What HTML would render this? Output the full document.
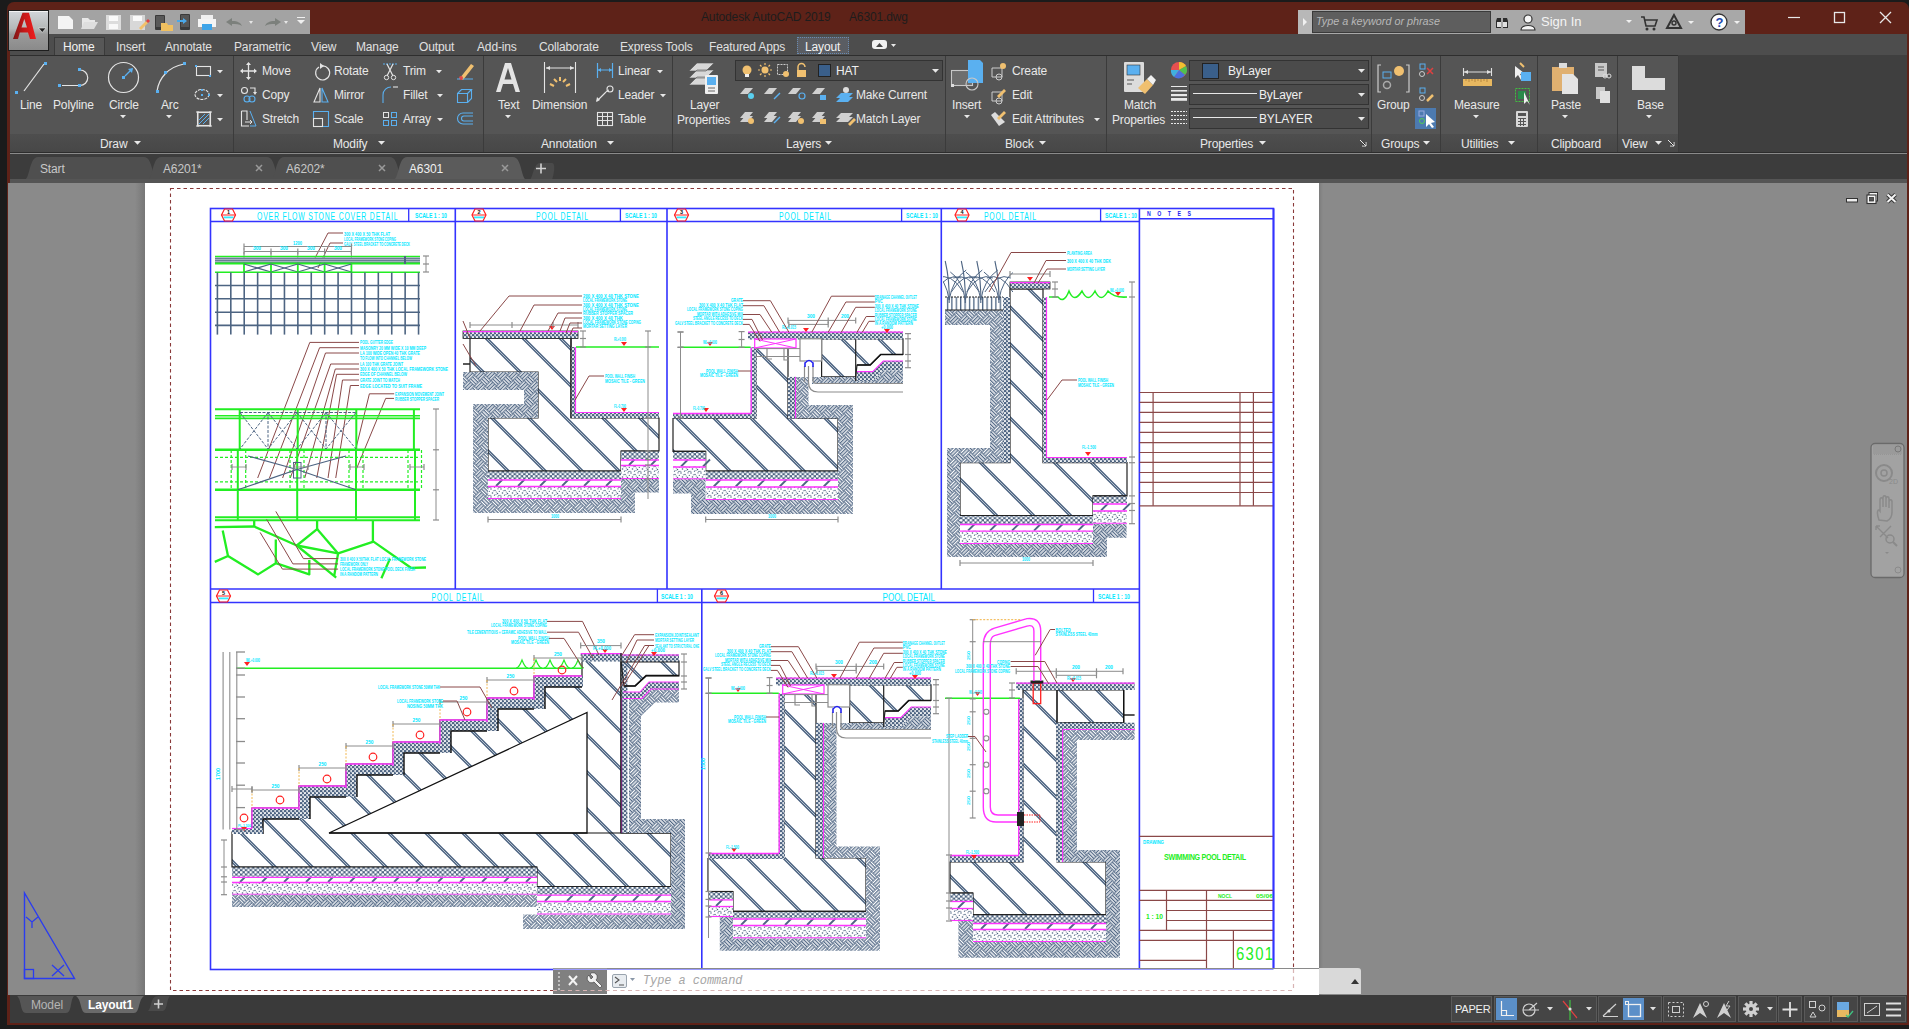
<!DOCTYPE html>
<html><head><meta charset="utf-8">
<style>
html,body{margin:0;padding:0;width:1909px;height:1029px;overflow:hidden;background:#1a1a1a;font-family:"Liberation Sans",sans-serif}
.a{position:absolute}
.t{position:absolute;white-space:nowrap;font-family:"Liberation Sans",sans-serif;line-height:1}
.rt{color:#e8e8e8;font-size:12.5px}
.tab{position:absolute;top:40.5px;letter-spacing:-0.15px;font-size:12px;color:#e0e0e0;white-space:nowrap;line-height:1}
svg{position:absolute;overflow:visible}
</style></head><body>
<!-- desktop -->
<div class="a" style="left:0;top:0;width:1909px;height:1029px;background:#1b1b1b"></div>
<!-- window frame -->
<div class="a" style="left:7px;top:2px;width:1902px;height:1023px;background:#5e2218;border-radius:7px 7px 0 0"></div>
<!-- title -->
<div class="t" style="left:701px;top:11px;font-size:12px;color:#1d1d1d;letter-spacing:-0.15px">Autodesk AutoCAD 2019</div>
<div class="t" style="left:849px;top:11px;font-size:12px;color:#1d1d1d;letter-spacing:-0.15px">A6301.dwg</div>
<!-- QAT -->
<div class="a" style="left:48px;top:10px;width:262px;height:24px;background:#a3a3a3"></div>

<svg style="left:48px;top:10px" width="262" height="24">
 <path d="M10 6 H21 L25 10 V19 H10 Z" fill="#f4f4f4"/>
 <path d="M34 8 H40 L42 10 H47 V12 H37 L34 19 Z" fill="#e8e8e8"/><path d="M36 12 H50 L46 19 H33 Z" fill="#dedede"/>
 <rect x="58" y="5" width="15" height="15" fill="#dcdcdc"/><rect x="61" y="6" width="9" height="5" fill="#fafafa"/><rect x="61" y="14" width="9" height="5" fill="#f8f8f8"/>
 <rect x="82" y="5" width="15" height="15" fill="#d8d8d8"/><rect x="85" y="6" width="9" height="5" fill="#fafafa"/><path d="M91 18 L98 11 L100 13 L93 20 Z" fill="#f2c06a"/><path d="M98 11 L100 9 L102 11 L100 13Z" fill="#e04040"/>
 <rect x="107" y="5" width="10" height="15" rx="1" fill="#3a3a3a"/><rect x="108" y="6" width="8" height="11" fill="#585858"/><path d="M113 13 H119 L120 15 H125 V21 H113 Z" fill="#f0c060"/>
 <rect x="132" y="4" width="10" height="16" rx="1" fill="#3a3a3a"/><rect x="133" y="5" width="8" height="12" fill="#555"/><path d="M129 10 H135 V8 L139 11 L135 14 V12 H129Z" fill="#4aa8e8"/>
 <rect x="153" y="5" width="12" height="5" fill="#f0f0f0"/><rect x="150" y="9" width="18" height="8" fill="#f4f4f4"/><rect x="154" y="14" width="10" height="6" fill="#3ea4e8"/>
 <path d="M178 12 L184 8 V11 C190 11 193 13 194 16 C191 14 188 14 184 14 V16 Z" fill="#7c807c"/><path d="M201 11 L205 11 L203 14Z" fill="#e6e6e6"/>
 <path d="M233 12 L227 8 V11 C221 11 218 13 217 16 C220 14 223 14 227 14 V16 Z" fill="#7c807c"/><path d="M236 11 L240 11 L238 14Z" fill="#e6e6e6"/>
 <path d="M249 7 H257 V8 H249Z M249 10 L257 10 L253 14Z" fill="#f0f0f0"/>
</svg>
<!-- search/info -->
<div class="a" style="left:1298px;top:10px;width:447px;height:24px;background:#a8a8a8"></div>
<div class="a" style="left:1298px;top:10px;width:14px;height:24px;background:#b8b8b8"></div>
<svg style="left:1298px;top:10px" width="14" height="24"><path d="M5 8 L9 12 L5 16Z" fill="#f0f0f0"/></svg>
<div class="a" style="left:1312px;top:11px;width:179px;height:22px;background:#5e5e5e;border:1px solid #3a3a3a;box-sizing:border-box"></div>
<div class="t" style="left:1316px;top:16px;font-size:10.8px;color:#b8b8b8;font-style:italic">Type a keyword or phrase</div>
<svg style="left:1490px;top:10px" width="260" height="24">
 <path d="M7 8 h4 v10 h-5 v-7z M13 8 h4 l1 3 v7 h-5z" fill="#2c2c2c"/><rect x="7" y="12" width="4" height="5" fill="#e0e0e0"/><rect x="13" y="12" width="4" height="5" fill="#e0e0e0"/>
 <circle cx="38" cy="9" r="4" fill="#f5f5f5" stroke="#333" stroke-width="1.2"/><path d="M31 20 C31 14 45 14 45 20Z" fill="#f5f5f5" stroke="#333" stroke-width="1.2"/>
 <path d="M136 10 L142 10 L139 13Z" fill="#f0f0f0"/>
 <path d="M151 7 h3 l2 9 h9 l2 -6 h-12" fill="none" stroke="#333" stroke-width="1.6"/><circle cx="157" cy="19" r="1.5" fill="#333"/><circle cx="164" cy="19" r="1.5" fill="#333"/>
 <path d="M184 5 L177 18 H191 Z" fill="none" stroke="#333" stroke-width="2"/><circle cx="184" cy="13" r="2" fill="none" stroke="#333" stroke-width="1.4"/>
 <path d="M198 11 L204 11 L201 14Z" fill="#f0f0f0"/>
 <circle cx="229" cy="12" r="8" fill="#fff" stroke="#333" stroke-width="1.3"/><text x="225.5" y="17" font-size="13" font-weight="bold" fill="#2448b0" font-family="Liberation Sans">?</text>
 <path d="M244 11 L250 11 L247 14Z" fill="#f0f0f0"/>
</svg>
<div class="t" style="left:1541px;top:15px;font-size:13px;color:#f4f4f4">Sign In</div>
<!-- window controls -->
<svg style="left:1780px;top:5px" width="129" height="26">
 <path d="M8 12.5 H20" stroke="#e8e8e8" stroke-width="1.2"/>
 <rect x="54.5" y="7.5" width="10" height="10" fill="none" stroke="#e8e8e8" stroke-width="1.3"/>
 <path d="M100 7 L111 18 M111 7 L100 18" stroke="#e8e8e8" stroke-width="1.3"/>
</svg>

<!-- ribbon tab row -->
<div class="a" style="left:10px;top:34px;width:1897px;height:21px;background:#4d4d4d"></div>
<div class="a" style="left:54px;top:37px;width:51px;height:19px;background:#575757;border:1px solid #3a3a3a;border-bottom:none;box-sizing:border-box"></div>
<div class="tab" style="left:63px;color:#f2f2f2">Home</div>
<div class="tab" style="left:116px">Insert</div>
<div class="tab" style="left:165px">Annotate</div>
<div class="tab" style="left:234px">Parametric</div>
<div class="tab" style="left:311px">View</div>
<div class="tab" style="left:356px">Manage</div>
<div class="tab" style="left:419px">Output</div>
<div class="tab" style="left:477px">Add-ins</div>
<div class="tab" style="left:539px">Collaborate</div>
<div class="tab" style="left:620px">Express Tools</div>
<div class="tab" style="left:709px">Featured Apps</div>
<div class="a" style="left:797px;top:37px;width:52px;height:17px;background:#5a5d63;border:1px dotted #6a8ab0;box-sizing:border-box"></div>
<div class="tab" style="left:805px;color:#f2f2f2">Layout</div>
<svg style="left:870px;top:38px" width="30" height="14"><rect x="2" y="2" width="15" height="9" rx="3" fill="#f0f0f0"/><path d="M6 9 L9.5 5 L13 9Z" fill="#444"/><path d="M21 6 L26 6 L23.5 9Z" fill="#e8e8e8"/></svg>

<!-- ribbon body -->
<div class="a" style="left:10px;top:55px;width:1897px;height:99px;background:#3f3f3f"></div>
<div class="a" style="left:10px;top:55px;width:1668px;height:1px;background:#2e2e2e"></div>
<!-- panels -->
<div class="a" style="left:10px;top:56px;width:1668px;height:97px;background:#555555"></div>
<div class="a" style="left:10px;top:134px;width:1668px;height:17.5px;background:linear-gradient(#4e4e4e,#474747)"></div>
<div class="a" style="left:10px;top:151.5px;width:1897px;height:1.5px;background:#2c2c2c"></div>
<div class="a" style="left:10px;top:153px;width:1897px;height:1.2px;background:#8a8a8a"></div>
<!-- separators -->
<div class="a" style="left:233px;top:56px;width:1px;height:96px;background:#3b3b3b"></div>
<div class="a" style="left:483px;top:56px;width:1px;height:96px;background:#3b3b3b"></div>
<div class="a" style="left:672px;top:56px;width:1px;height:96px;background:#3b3b3b"></div>
<div class="a" style="left:945px;top:56px;width:1px;height:96px;background:#3b3b3b"></div>
<div class="a" style="left:1106px;top:56px;width:1px;height:96px;background:#3b3b3b"></div>
<div class="a" style="left:1371px;top:56px;width:1px;height:96px;background:#3b3b3b"></div>
<div class="a" style="left:1440px;top:56px;width:1px;height:96px;background:#3b3b3b"></div>
<div class="a" style="left:1537px;top:56px;width:1px;height:96px;background:#3b3b3b"></div>
<div class="a" style="left:1617px;top:56px;width:1px;height:96px;background:#3b3b3b"></div>
<div class="a" style="left:1678px;top:56px;width:1px;height:96px;background:#3b3b3b"></div>
<div class="t" style="left:20px;top:98.5px;font-size:12px;color:#e8e8e8;letter-spacing:-0.15px;">Line</div><div class="t" style="left:53px;top:98.5px;font-size:12px;color:#e8e8e8;letter-spacing:-0.15px;">Polyline</div><div class="t" style="left:109px;top:98.5px;font-size:12px;color:#e8e8e8;letter-spacing:-0.15px;">Circle</div><div class="t" style="left:161px;top:98.5px;font-size:12px;color:#e8e8e8;letter-spacing:-0.15px;">Arc</div><div class="t" style="left:100px;top:137.5px;font-size:12px;color:#e8e8e8;letter-spacing:-0.15px;">Draw</div><div class="t" style="left:262px;top:64.5px;font-size:12px;color:#e8e8e8;letter-spacing:-0.15px;">Move</div><div class="t" style="left:334px;top:64.5px;font-size:12px;color:#e8e8e8;letter-spacing:-0.15px;">Rotate</div><div class="t" style="left:403px;top:64.5px;font-size:12px;color:#e8e8e8;letter-spacing:-0.15px;">Trim</div><div class="t" style="left:262px;top:88.5px;font-size:12px;color:#e8e8e8;letter-spacing:-0.15px;">Copy</div><div class="t" style="left:334px;top:88.5px;font-size:12px;color:#e8e8e8;letter-spacing:-0.15px;">Mirror</div><div class="t" style="left:403px;top:88.5px;font-size:12px;color:#e8e8e8;letter-spacing:-0.15px;">Fillet</div><div class="t" style="left:262px;top:112.5px;font-size:12px;color:#e8e8e8;letter-spacing:-0.15px;">Stretch</div><div class="t" style="left:334px;top:112.5px;font-size:12px;color:#e8e8e8;letter-spacing:-0.15px;">Scale</div><div class="t" style="left:403px;top:112.5px;font-size:12px;color:#e8e8e8;letter-spacing:-0.15px;">Array</div><div class="t" style="left:333px;top:137.5px;font-size:12px;color:#e8e8e8;letter-spacing:-0.15px;">Modify</div><div class="t" style="left:498px;top:98.5px;font-size:12px;color:#e8e8e8;letter-spacing:-0.15px;">Text</div><div class="t" style="left:532px;top:98.5px;font-size:12px;color:#e8e8e8;letter-spacing:-0.15px;">Dimension</div><div class="t" style="left:618px;top:64.5px;font-size:12px;color:#e8e8e8;letter-spacing:-0.15px;">Linear</div><div class="t" style="left:618px;top:88.5px;font-size:12px;color:#e8e8e8;letter-spacing:-0.15px;">Leader</div><div class="t" style="left:618px;top:112.5px;font-size:12px;color:#e8e8e8;letter-spacing:-0.15px;">Table</div><div class="t" style="left:541px;top:137.5px;font-size:12px;color:#e8e8e8;letter-spacing:-0.15px;">Annotation</div><div class="t" style="left:690px;top:98.5px;font-size:12px;color:#e8e8e8;letter-spacing:-0.15px;">Layer</div><div class="t" style="left:677px;top:113.5px;font-size:12px;color:#e8e8e8;letter-spacing:-0.15px;">Properties</div><div class="a" style="left:735px;top:60px;width:208px;height:21px;background:#4b4b4b;border:1px solid #333;box-sizing:border-box"></div><div class="t" style="left:836px;top:64.5px;font-size:12px;color:#f0f0f0;letter-spacing:-0.15px;">HAT</div><div class="t" style="left:856px;top:88.5px;font-size:12px;color:#e8e8e8;letter-spacing:-0.15px;">Make Current</div><div class="t" style="left:856px;top:112.5px;font-size:12px;color:#e8e8e8;letter-spacing:-0.15px;">Match Layer</div><div class="t" style="left:786px;top:137.5px;font-size:12px;color:#e8e8e8;letter-spacing:-0.15px;">Layers</div><div class="t" style="left:952px;top:98.5px;font-size:12px;color:#e8e8e8;letter-spacing:-0.15px;">Insert</div><div class="t" style="left:1012px;top:64.5px;font-size:12px;color:#e8e8e8;letter-spacing:-0.15px;">Create</div><div class="t" style="left:1012px;top:88.5px;font-size:12px;color:#e8e8e8;letter-spacing:-0.15px;">Edit</div><div class="t" style="left:1012px;top:112.5px;font-size:12px;color:#e8e8e8;letter-spacing:-0.15px;">Edit Attributes</div><div class="t" style="left:1005px;top:137.5px;font-size:12px;color:#e8e8e8;letter-spacing:-0.15px;">Block</div><div class="t" style="left:1124px;top:98.5px;font-size:12px;color:#e8e8e8;letter-spacing:-0.15px;">Match</div><div class="t" style="left:1112px;top:113.5px;font-size:12px;color:#e8e8e8;letter-spacing:-0.15px;">Properties</div><div class="a" style="left:1189px;top:60px;width:180px;height:21px;background:#4b4b4b;border:1px solid #333;box-sizing:border-box"></div><div class="a" style="left:1189px;top:84px;width:180px;height:21px;background:#4b4b4b;border:1px solid #333;box-sizing:border-box"></div><div class="a" style="left:1189px;top:108px;width:180px;height:21px;background:#4b4b4b;border:1px solid #333;box-sizing:border-box"></div><div class="t" style="left:1228px;top:64.5px;font-size:12px;color:#f0f0f0;letter-spacing:-0.15px;">ByLayer</div><div class="t" style="left:1259px;top:88.5px;font-size:12px;color:#f0f0f0;letter-spacing:-0.15px;">ByLayer</div><div class="t" style="left:1259px;top:112.5px;font-size:12px;color:#f0f0f0;letter-spacing:-0.15px;">BYLAYER</div><div class="t" style="left:1200px;top:137.5px;font-size:12px;color:#e8e8e8;letter-spacing:-0.15px;">Properties</div><div class="t" style="left:1377px;top:98.5px;font-size:12px;color:#e8e8e8;letter-spacing:-0.15px;">Group</div><div class="t" style="left:1381px;top:137.5px;font-size:12px;color:#e8e8e8;letter-spacing:-0.15px;">Groups</div><div class="t" style="left:1454px;top:98.5px;font-size:12px;color:#e8e8e8;letter-spacing:-0.15px;">Measure</div><div class="t" style="left:1461px;top:137.5px;font-size:12px;color:#e8e8e8;letter-spacing:-0.15px;">Utilities</div><div class="t" style="left:1551px;top:98.5px;font-size:12px;color:#e8e8e8;letter-spacing:-0.15px;">Paste</div><div class="t" style="left:1551px;top:137.5px;font-size:12px;color:#e8e8e8;letter-spacing:-0.15px;">Clipboard</div><div class="t" style="left:1637px;top:98.5px;font-size:12px;color:#e8e8e8;letter-spacing:-0.15px;">Base</div><div class="t" style="left:1622px;top:137.5px;font-size:12px;color:#e8e8e8;letter-spacing:-0.15px;">View</div><svg style="left:0;top:0" width="1909" height="160"><line x1="24" y1="91" x2="44" y2="64" stroke="#e4e4e4" stroke-width="1.2"/><rect x="15" y="91" width="3" height="3" fill="#5ab0f0"/><rect x="44" y="62" width="3" height="3" fill="#5ab0f0"/><path d="M62 85.5 H79 M80 70 A7.5 7.5 0 0 1 80 85.5" fill="none" stroke="#e4e4e4" stroke-width="1.2"/><rect x="58" y="84" width="3" height="3" fill="#5ab0f0"/><rect x="78" y="84" width="3" height="3" fill="#5ab0f0"/><rect x="78" y="68" width="3" height="3" fill="#5ab0f0"/><circle cx="123.5" cy="77.5" r="15" fill="none" stroke="#e4e4e4" stroke-width="1.2"/><rect x="122" y="76" width="3" height="3" fill="#5ab0f0"/><path d="M125 76 L132 69" stroke="#5ab0f0" stroke-width="1.2"/><path d="M133 68 L128 69 L132 73Z" fill="#5ab0f0"/><path d="M120 115 h6 l-3.0 3.3000000000000003z" fill="#e8e8e8"/><path d="M157 91 C159 78 168 67 184 64" fill="none" stroke="#e4e4e4" stroke-width="1.2"/><rect x="156" y="90" width="3" height="3" fill="#5ab0f0"/><rect x="164" y="71" width="3" height="3" fill="#5ab0f0"/><rect x="183" y="62" width="3" height="3" fill="#5ab0f0"/><path d="M166 115 h6 l-3.0 3.3000000000000003z" fill="#e8e8e8"/><rect x="196.5" y="66.5" width="14" height="9" fill="none" stroke="#e4e4e4" stroke-width="1.1"/><rect x="195" y="65" width="2" height="2" fill="#5ab0f0"/><rect x="209" y="75" width="2" height="2" fill="#5ab0f0"/><path d="M217 70 h6 l-3.0 3.3000000000000003z" fill="#e8e8e8"/><ellipse cx="202" cy="94.5" rx="7" ry="5" fill="none" stroke="#e4e4e4" stroke-width="1.1" stroke-dasharray="3 1"/><rect x="201" y="89" width="2" height="2" fill="#5ab0f0"/><rect x="201" y="94" width="2" height="2" fill="#5ab0f0"/><rect x="208" y="94" width="2" height="2" fill="#5ab0f0"/><path d="M217 94 h6 l-3.0 3.3000000000000003z" fill="#e8e8e8"/><rect x="197.5" y="112.5" width="13" height="13" fill="none" stroke="#e4e4e4" stroke-width="1.1"/><path d="M196 112 H212 M196 126 H212 M198 111 V127 M210 111 V127" stroke="#e4e4e4" stroke-width="1"/><path d="M199 124 L209 114 M199 120 L205 114 M203 124 L209 118" stroke="#5ab0f0" stroke-width="1"/><path d="M217 118 h6 l-3.0 3.3000000000000003z" fill="#e8e8e8"/><path d="M134 141 h7 l-3.5 3.8500000000000005z" fill="#e8e8e8"/><path d="M248.5 63 V79 M241 71 H256" stroke="#e4e4e4" stroke-width="1.3"/><path d="M248.5 62 l-2.5 3 h5z M248.5 80 l-2.5 -3 h5z M240 71 l3 -2.5 v5z M257 71 l-3 -2.5 v5z" fill="#e4e4e4"/><path d="M319 67 A7 7 0 1 0 322 66" fill="none" stroke="#e4e4e4" stroke-width="1.2"/><path d="M320 63 L324 66 L320 69Z" fill="#e4e4e4"/><path d="M383 64 H397" stroke="#5ab0f0" stroke-width="1" stroke-dasharray="2 1"/><path d="M387 64 L393 76 M393 64 L387 76" stroke="#e4e4e4" stroke-width="1.2"/><circle cx="386.5" cy="77.5" r="2.2" fill="none" stroke="#e4e4e4"/><circle cx="393.5" cy="77.5" r="2.2" fill="none" stroke="#e4e4e4"/><path d="M436 70 h6 l-3.0 3.3000000000000003z" fill="#e8e8e8"/><path d="M460 78 L471 64 L474 66 L463 80Z" fill="#f0c070"/><circle cx="461" cy="78" r="2" fill="#e04848"/><path d="M457 79 H460 M463 79 H473" stroke="#5ab0f0" stroke-width="1"/><circle cx="244.5" cy="90.5" r="3" fill="none" stroke="#e4e4e4" stroke-width="1.1"/><path d="M250 88 H255 V93" fill="none" stroke="#e4e4e4" stroke-width="1.1"/><path d="M253 92 h4 l-2 3z" fill="#e4e4e4"/><circle cx="247" cy="99" r="3" fill="none" stroke="#5ab0f0" stroke-width="1.1"/><circle cx="252" cy="99" r="3" fill="none" stroke="#5ab0f0" stroke-width="1.1"/><path d="M320 88 L314 102 H320Z" fill="none" stroke="#e4e4e4" stroke-width="1.1"/><path d="M322 88 L328 102 H322Z" fill="none" stroke="#5ab0f0" stroke-width="1.1"/><path d="M383 103 V95 C383 90 387 87 391 87" fill="none" stroke="#5ab0f0" stroke-width="1.1"/><path d="M393 87 H398" stroke="#e4e4e4" stroke-width="1.1"/><path d="M437 94 h6 l-3.0 3.3000000000000003z" fill="#e8e8e8"/><path d="M457.5 93.5 h10 v9 h-10z M457.5 93.5 l4 -4 h10 l-4 4 M467.5 102.5 l4 -4 v-9" fill="none" stroke="#5ab0f0" stroke-width="1.1"/><path d="M241.5 111 V126 H249 M241.5 111 H247 V120" fill="none" stroke="#e4e4e4" stroke-width="1.1"/><path d="M250 111 L256 126 H250" fill="none" stroke="#5ab0f0" stroke-width="1"/><path d="M245 122 H252 l-2 -2 M252 122 l-2 2" fill="none" stroke="#e4e4e4" stroke-width="1"/><rect x="313.5" y="118.5" width="9" height="8" fill="none" stroke="#e4e4e4" stroke-width="1.1"/><path d="M313.5 118 V111.5 H328.5 V126.5 H323" fill="none" stroke="#5ab0f0" stroke-width="1.1"/><rect x="383.5" y="112.5" width="5" height="5" fill="none" stroke="#e4e4e4"/><rect x="391.5" y="112.5" width="5" height="5" fill="none" stroke="#5ab0f0"/><rect x="383.5" y="120.5" width="5" height="5" fill="none" stroke="#5ab0f0"/><rect x="391.5" y="120.5" width="5" height="5" fill="none" stroke="#5ab0f0"/><path d="M437 118 h6 l-3.0 3.3000000000000003z" fill="#e8e8e8"/><path d="M473 113 H463 A5.5 5.5 0 0 0 463 124 H473 M473 116 H464 A2.5 2.5 0 0 0 464 121 H473" fill="none" stroke="#5ab0f0" stroke-width="1.1"/><path d="M378 141 h7 l-3.5 3.8500000000000005z" fill="#e8e8e8"/><path d="M496 92 L505 63 H511 L520 92 H515.5 L513 84 H503 L500.5 92Z M504.5 79.5 H511.5 L508 68Z" fill="#e4e4e4"/><path d="M505 115 h6 l-3.0 3.3000000000000003z" fill="#e8e8e8"/><path d="M544.5 62 V93 M575.5 62 V93 M546 68 H574" stroke="#e4e4e4" stroke-width="1.1"/><path d="M546 68 l4 -2 v4z M574 68 l-4 -2 v4z" fill="#e4e4e4"/><path d="M554 86 L550 84 M557 82 L554 79 M560 81 V77 M563 82 L566 79 M566 86 L570 84" stroke="#f0c070" stroke-width="2"/><path d="M597.5 63 V78 M612.5 63 V78 M598 70 H612" stroke="#5ab0f0" stroke-width="1.2"/><path d="M598 70 l3 -2 v4z M612 70 l-3 -2 v4z" fill="#5ab0f0"/><path d="M657 70 h6 l-3.0 3.3000000000000003z" fill="#e8e8e8"/><path d="M597 101 L605 93 C607 91 608 90 609 90" fill="none" stroke="#e4e4e4" stroke-width="1.1"/><circle cx="610" cy="89" r="3" fill="none" stroke="#e4e4e4" stroke-width="1.1"/><path d="M596 102 l1 -5 l3 3z" fill="#e4e4e4"/><path d="M660 94 h6 l-3.0 3.3000000000000003z" fill="#e8e8e8"/><rect x="597.5" y="112.5" width="15" height="13" fill="none" stroke="#e4e4e4" stroke-width="1.1"/><path d="M597 116.5 H613 M597 120.5 H613 M602.5 113 V125 M607.5 113 V125" stroke="#e4e4e4" stroke-width="1"/><path d="M607 141 h7 l-3.5 3.8500000000000005z" fill="#e8e8e8"/><path d="M689 71 L697 63 H714 L706 71Z M689 78 L697 70 H714 L706 78Z M689 85 L697 77 H714 L706 85Z" fill="#d8d8d8" stroke="#555" stroke-width="0.6"/><rect x="705" y="75" width="13" height="19" rx="1" fill="#f0f0f0"/><rect x="707" y="77" width="9" height="8" fill="#5ab0f0"/><path d="M708 88 H715 M708 91 H715" stroke="#444" stroke-width="0.8"/><circle cx="747" cy="70" r="4.5" fill="#f0c070"/><rect x="745" y="74" width="4" height="3" fill="#f0f0f0"/><circle cx="765" cy="70" r="3.5" fill="#f0c070"/><path d="M765 63 V65 M765 75 V77 M758 70 H760 M770 70 H772 M760 65 L761.5 66.5 M770 65 L768.5 66.5 M760 75 L761.5 73.5 M770 75 L768.5 73.5" stroke="#f0c070" stroke-width="1.2"/><rect x="777.5" y="64.5" width="10" height="10" fill="none" stroke="#ccc" stroke-dasharray="2 1"/><circle cx="786" cy="74" r="3" fill="#f0c070"/><path d="M798 71 V67 A3.5 3.5 0 0 1 805 67" fill="none" stroke="#f0c070" stroke-width="1.5"/><rect x="797" y="70" width="9" height="7" fill="#f0c070"/><rect x="818.5" y="64.5" width="12" height="12" fill="#3a5f8a" stroke="#222"/><path d="M932 69 h7 l-3.5 3.8500000000000005z" fill="#e8e8e8"/><path d="M740 94 L745 88 H753 L748 94Z" fill="#d0d0d0"/><path d="M764 94 L769 88 H777 L772 94Z" fill="#d0d0d0"/><path d="M788 94 L793 88 H801 L796 94Z" fill="#d0d0d0"/><path d="M812 94 L817 88 H825 L820 94Z" fill="#d0d0d0"/><circle cx="751" cy="96" r="3" fill="#5ad0f0"/><path d="M774 99 L780 93" stroke="#5ab0f0" stroke-width="1.4"/><circle cx="802" cy="96" r="3" fill="none" stroke="#5ab0f0" stroke-width="1.2"/><rect x="820" y="95" width="6" height="5" fill="#5ab0f0"/><path d="M836 98 L841 93 H853 L848 98Z M836 102 L841 97 H853 L848 102Z" fill="#5ab0f0"/><circle cx="846" cy="90" r="3" fill="#ddd"/><path d="M740 118 L745 112 H753 L748 118Z M740 122 L745 116 H753 L748 122Z" fill="#d0d0d0"/><path d="M764 118 L769 112 H777 L772 118Z M764 122 L769 116 H777 L772 122Z" fill="#d0d0d0"/><path d="M788 118 L793 112 H801 L796 118Z M788 122 L793 116 H801 L796 122Z" fill="#d0d0d0"/><path d="M812 118 L817 112 H825 L820 118Z M812 122 L817 116 H825 L820 122Z" fill="#d0d0d0"/><circle cx="751" cy="121" r="3" fill="#f0c070"/><path d="M774 123 L780 117" stroke="#5ab0f0" stroke-width="1.4"/><circle cx="801" cy="121" r="3" fill="#f0c070"/><rect x="820" y="119" width="6" height="5" fill="#f0c070"/><path d="M836 118 L841 113 H853 L848 118Z M836 122 L841 117 H853 L848 122Z" fill="#d0d0d0"/><path d="M848 124 L854 118 L856 120 L850 126Z" fill="#f0c070"/><path d="M825 141 h7 l-3.5 3.8500000000000005z" fill="#e8e8e8"/><rect x="951.5" y="70.5" width="21" height="15" fill="#6e6e6e" stroke="#c8c8c8" stroke-width="1.1"/><path d="M968 60 H980 L983 63 V83 H968Z" fill="#5ab0f0"/><circle cx="972" cy="84" r="6" fill="none" stroke="#c8c8c8" stroke-width="1.1"/><rect x="951" y="84" width="3" height="3" fill="#ddd"/><path d="M964 115 h6 l-3.0 3.3000000000000003z" fill="#e8e8e8"/><path d="M992 68 H1002 V77 H992Z" fill="none" stroke="#ccc"/><circle cx="999" cy="77" r="3" fill="none" stroke="#ccc"/><circle cx="1003" cy="66" r="3" fill="#f0c070"/><path d="M992 92 H1002 V101 H992Z" fill="none" stroke="#ccc"/><circle cx="999" cy="101" r="3" fill="none" stroke="#ccc"/><path d="M997 96 L1004 89 L1006 91 L999 98Z" fill="#f0c070"/><path d="M991 115 L995 112 L1005 122 L999 126Z" fill="#ddd"/><path d="M997 118 L1004 111 L1006 113 L999 120Z" fill="#f0c070"/><path d="M1094 118 h6 l-3.0 3.3000000000000003z" fill="#e8e8e8"/><path d="M1039 141 h7 l-3.5 3.8500000000000005z" fill="#e8e8e8"/><rect x="1124" y="62" width="20" height="30" rx="1" fill="#dcdcdc"/><rect x="1127" y="65" width="13" height="10" fill="#5ab0f0" stroke="#333" stroke-width="0.6"/><path d="M1127 80 H1134 M1127 84 H1132" stroke="#555" stroke-width="1"/><path d="M1138 88 L1147 79 L1153 85 L1145 94Z" fill="#f0c070"/><path d="M1147 79 L1151 75 L1156 80 L1153 85Z" fill="#f0f0f0"/><circle cx="1179" cy="70" r="8" fill="#e85050"/><path d="M1179 70 L1179 62 A8 8 0 0 1 1186 66Z" fill="#f0c030"/><path d="M1179 70 L1186 66 A8 8 0 0 1 1185 75Z" fill="#50c050"/><path d="M1179 70 L1185 75 A8 8 0 0 1 1174 77Z" fill="#4a70e0"/><path d="M1179 70 L1174 77 A8 8 0 0 1 1171 70Z" fill="#40b0e0"/><rect x="1171" y="86" width="16" height="1.0" fill="#e8e8e8"/><rect x="1171" y="90" width="16" height="1.6" fill="#e8e8e8"/><rect x="1171" y="94" width="16" height="2.2" fill="#e8e8e8"/><rect x="1171" y="98" width="16" height="2.8" fill="#e8e8e8"/><path d="M1171 111.5 H1187" stroke="#e8e8e8" stroke-width="1" stroke-dasharray="2 1"/><path d="M1171 115.5 H1187" stroke="#e8e8e8" stroke-width="1" stroke-dasharray="2 1"/><path d="M1171 119.5 H1187" stroke="#e8e8e8" stroke-width="1" stroke-dasharray="2 1"/><path d="M1171 123.5 H1187" stroke="#e8e8e8" stroke-width="1" stroke-dasharray="2 1"/><path d="M1358 69 h7 l-3.5 3.8500000000000005z" fill="#e8e8e8"/><path d="M1358 93 h7 l-3.5 3.8500000000000005z" fill="#e8e8e8"/><path d="M1358 117 h7 l-3.5 3.8500000000000005z" fill="#e8e8e8"/><rect x="1202.5" y="63.5" width="16" height="15" fill="#3a5f8a" stroke="#222"/><path d="M1193 93.5 H1257 M1193 117.5 H1257" stroke="#e8e8e8" stroke-width="1"/><path d="M1259 141 h7 l-3.5 3.8500000000000005z" fill="#e8e8e8"/><path d="M1360 140 L1366 146 M1366 142 V146 H1362" stroke="#e8e8e8" stroke-width="1"/><path d="M1381 65 H1378 V92 H1381 M1406 65 H1409 V92 H1406" fill="none" stroke="#ccc" stroke-width="1.2"/><rect x="1383" y="72" width="8" height="6" fill="none" stroke="#5ab0f0"/><circle cx="1387" cy="85" r="3.5" fill="none" stroke="#aaa" stroke-width="1.5"/><circle cx="1399" cy="71" r="5" fill="#f0c070"/><rect x="1420" y="64" width="5" height="5" fill="none" stroke="#5ab0f0"/><circle cx="1422" cy="74" r="2.5" fill="none" stroke="#ccc"/><path d="M1427 68 L1433 74 M1433 68 L1427 74" stroke="#e04040" stroke-width="1.5"/><rect x="1420" y="88" width="5" height="5" fill="none" stroke="#5ab0f0"/><circle cx="1422" cy="98" r="2.5" fill="none" stroke="#ccc"/><path d="M1427 101 L1433 95" stroke="#f0c070" stroke-width="2.5"/><rect x="1415" y="108" width="21" height="21" fill="#4c7ab0"/><rect x="1419" y="111" width="5" height="5" fill="none" stroke="#9ad"/><circle cx="1422" cy="121" r="2.5" fill="none" stroke="#5c5"/><path d="M1426 114 L1426 127 L1429 124 L1432 128 L1434 127 L1431 123 L1435 122Z" fill="#fff"/><path d="M1423 141 h7 l-3.5 3.8500000000000005z" fill="#e8e8e8"/><path d="M1464 72 H1491 M1463.5 68 V76 M1491.5 68 V76" stroke="#e0e0e0" stroke-width="1.1"/><path d="M1464 72 l4 -2 v4z M1491 72 l-4 -2 v4z" fill="#e0e0e0"/><rect x="1463" y="79" width="29" height="7" fill="#e8b860"/><path d="M1466 79 v2 M1469 79 v3 M1472 79 v2 M1475 79 v3 M1478 79 v2 M1481 79 v3 M1484 79 v2 M1487 79 v3" stroke="#a07030" stroke-width="0.7"/><path d="M1473 115 h6 l-3.0 3.3000000000000003z" fill="#e8e8e8"/><path d="M1515 66 L1515 78 L1518 75 L1521 80 L1523 79 L1520 74 L1524 73Z" fill="#f0f0f0"/><rect x="1521" y="72" width="10" height="9" fill="#5ab0f0"/><path d="M1520 63 L1524 67" stroke="#f0c070" stroke-width="2"/><rect x="1515.5" y="88.5" width="14" height="13" fill="none" stroke="#40c040" stroke-dasharray="2 1"/><rect x="1518" y="91" width="8" height="8" fill="#2a8a4a"/><path d="M1524 92 L1524 104 L1527 101 L1530 105Z" fill="#f0f0f0"/><rect x="1516" y="111" width="12" height="16" rx="1" fill="#d8d8d8"/><rect x="1518" y="113" width="8" height="3" fill="#555"/><path d="M1518 118.5 h8 M1518 121.5 h8 M1518 124.5 h8 M1520.5 118 v8 M1523.5 118 v8" stroke="#555" stroke-width="1"/><path d="M1508 141 h7 l-3.5 3.8500000000000005z" fill="#e8e8e8"/><rect x="1552" y="67" width="22" height="24" fill="#e0b070"/><rect x="1559" y="63" width="8" height="5" fill="#ddd"/><path d="M1562 74 H1573 L1578 79 V94 H1562Z" fill="#e4e4e4"/><path d="M1562 115 h6 l-3.0 3.3000000000000003z" fill="#e8e8e8"/><rect x="1595" y="63" width="12" height="14" fill="#c8c8c8"/><path d="M1598 67 h6 M1598 70 h6" stroke="#555"/><circle cx="1605" cy="76" r="2" fill="none" stroke="#ddd"/><circle cx="1609" cy="76" r="2" fill="none" stroke="#ddd"/><rect x="1596" y="87" width="9" height="12" fill="#c8c8c8"/><rect x="1600" y="91" width="10" height="12" fill="#e0e0e0"/><path d="M1632 66 H1645 V78 H1665 V90 H1632Z" fill="#dcdcdc"/><path d="M1646 115 h6 l-3.0 3.3000000000000003z" fill="#e8e8e8"/><path d="M1655 141 h7 l-3.5 3.8500000000000005z" fill="#e8e8e8"/><path d="M1668 140 L1674 146 M1674 142 V146 H1670" stroke="#e8e8e8" stroke-width="1"/></svg>
<!-- app button -->
<div class="a" style="left:8px;top:10px;width:41px;height:41px;background:linear-gradient(#d2d6da,#b4b8b8 45%,#9a9a9a 60%,#8a8a8a);border:1px solid #1e1e1e;box-sizing:border-box;box-shadow:inset 0 1px 0 #f4f4f4"></div>
<svg style="left:0;top:0" width="60" height="60"><defs><linearGradient id="ag" x1="0" x2="1"><stop offset="0" stop-color="#7a1515"/><stop offset="0.5" stop-color="#c81818"/><stop offset="1" stop-color="#f01c1c"/></linearGradient></defs>
<path d="M13 39 L22.5 12.8 L29 12.8 L36 39 L30 39 L28 32.5 L19.8 32.5 L18 39 Z M21.5 27.5 L27 27.5 L24.3 19 Z" fill="url(#ag)" fill-rule="evenodd"/>
<path d="M38.5 28 L46 28 L42.25 32.5Z" fill="#222" stroke="#f0f0f0" stroke-width="0.6"/></svg>


<!-- document tab bar -->
<div class="a" style="left:10px;top:154px;width:1897px;height:29px;background:#3c3c3c"></div>
<svg style="left:0;top:150px" width="1909" height="40"><g transform="translate(0,-150)"><path d="M24 180 C30 180 29 157 38 157 H144 C153 157 152 180 158 180Z" fill="#4f4f4f"/><path d="M147 180 C153 180 152 157 161 157 H267 C276 157 275 180 281 180Z" fill="#4f4f4f"/><path d="M270 180 C276 180 275 157 284 157 H390 C399 157 398 180 404 180Z" fill="#4f4f4f"/><path d="M393 180 C399 180 398 157 407 157 H513 C522 157 521 180 527 180Z" fill="#5b5b5b"/><path d="M529 180 C533 180 533 163 540 163 H552 C555 163 555 170 552 180Z" fill="#4a4a4a"/><path d="M536 168.5 H546 M541 163.5 V173.5" stroke="#d0d0d0" stroke-width="1.6"/><path d="M256 165 L262 171 M262 165 L256 171" stroke="#9a9a9a" stroke-width="1.5"/><path d="M379 165 L385 171 M385 165 L379 171" stroke="#9a9a9a" stroke-width="1.5"/><path d="M502 165 L508 171 M508 165 L502 171" stroke="#9a9a9a" stroke-width="1.5"/></g></svg><div class="t" style="left:40px;top:162.5px;font-size:12px;color:#c8c8c8;letter-spacing:-0.15px;">Start</div><div class="t" style="left:163px;top:162.5px;font-size:12px;color:#c8c8c8;letter-spacing:-0.15px;">A6201*</div><div class="t" style="left:286px;top:162.5px;font-size:12px;color:#c8c8c8;letter-spacing:-0.15px;">A6202*</div><div class="t" style="left:409px;top:162.5px;font-size:12px;color:#f0f0f0;letter-spacing:-0.15px;">A6301</div><div class="a" style="left:10px;top:179px;width:1897px;height:4px;background:#555"></div>

<!-- viewport -->
<div class="a" style="left:8px;top:183px;width:1899px;height:812px;background:#8a8a8a"></div>

<div class="a" style="left:135px;top:183px;width:10px;height:812px;background:linear-gradient(90deg,#8a8a8a,#777)"></div>
<div class="a" style="left:1319px;top:183px;width:4px;height:812px;background:linear-gradient(90deg,#7c7c7c,#8a8a8a)"></div>
<div class="a" style="left:145px;top:183px;width:1174px;height:812px;background:#ffffff"></div>
<svg style="left:0;top:0" width="1909" height="1029" shape-rendering="auto"><defs>
<pattern id="conc" patternUnits="userSpaceOnUse" width="37" height="37">
 <path d="M-2 -2 L39 39 M-2 35 L2 39 M35 -2 L39 2" stroke="#4d6482" stroke-width="3.3"/>
 <path d="M-2 -2 L39 39 M-2 35 L2 39 M35 -2 L39 2" stroke="#b4c0cc" stroke-width="1"/>
</pattern>
<pattern id="soil" patternUnits="userSpaceOnUse" width="15.6" height="15.6" patternTransform="rotate(45)">
 <rect width="15.6" height="15.6" fill="#4d6482"/>
 <path d="M0.3 1.35 H7.5 M0.3 3.9 H7.5 M0.3 6.45 H7.5 M8.1 9.15 H15.299999999999999 M8.1 11.7 H15.299999999999999 M8.1 14.25 H15.299999999999999" stroke="#fff" stroke-width="1.35"/>
 <path d="M9.15 0.3 V7.5 M11.7 0.3 V7.5 M14.25 0.3 V7.5 M1.35 8.1 V15.299999999999999 M3.9 8.1 V15.299999999999999 M6.45 8.1 V15.299999999999999" stroke="#fff" stroke-width="1.35"/>
</pattern>
<pattern id="grav" patternUnits="userSpaceOnUse" width="4.8" height="4.4">
 <rect width="4.8" height="4.4" fill="#4d6482"/>
 <circle cx="1.2" cy="1.1" r="1.3" fill="#fff"/><circle cx="3.6" cy="3.3" r="1.3" fill="#fff"/>
</pattern>
<pattern id="sand" patternUnits="userSpaceOnUse" width="10" height="8">
 <rect width="10" height="8" fill="#fff"/>
 <circle cx="1" cy="1" r="0.75" fill="#4d6482"/><circle cx="5" cy="2.5" r="0.75" fill="#4d6482"/><circle cx="2.5" cy="5" r="0.8" fill="#4d6482"/><circle cx="7.5" cy="5.5" r="0.75" fill="#4d6482"/><circle cx="8" cy="0.8" r="0.65" fill="#4d6482"/><circle cx="4.5" cy="7.2" r="0.65" fill="#4d6482"/><circle cx="9.3" cy="3.3" r="0.65" fill="#4d6482"/><circle cx="9" cy="7.5" r="0.7" fill="#4d6482"/><circle cx="0.8" cy="7.3" r="0.55" fill="#4d6482"/><circle cx="6.3" cy="4" r="0.55" fill="#4d6482"/><circle cx="3.3" cy="2.8" r="0.5" fill="#4d6482"/><circle cx="6" cy="6.5" r="0.5" fill="#4d6482"/>
</pattern>
<pattern id="stone" patternUnits="userSpaceOnUse" width="4" height="4">
 <rect width="4" height="4" fill="#4d6482"/>
 <circle cx="1" cy="1.1" r="1.05" fill="#fff"/><circle cx="3.1" cy="3" r="0.9" fill="#fff"/><circle cx="3.2" cy="0.6" r="0.45" fill="#fff"/>
</pattern>
<pattern id="grass" patternUnits="userSpaceOnUse" width="4.4" height="13">
 <path d="M1.5 0 V13" stroke="#4d6482" stroke-width="1.3"/>
</pattern>
</defs><rect x="170.5" y="188.5" width="1123.00" height="802.00" fill="none" stroke="#8a3a3a" stroke-width="1.1" stroke-dasharray="3.5 3"/><rect x="210.5" y="208.5" width="1063.00" height="761.00" fill="none" stroke="#3333ff" stroke-width="1.6" /><line x1="210.5" y1="221.5" x2="1139.4" y2="221.5" stroke="#3333ff" stroke-width="1.6" /><line x1="455.3" y1="208.5" x2="455.3" y2="589" stroke="#3333ff" stroke-width="1.6" /><line x1="667" y1="208.5" x2="667" y2="589" stroke="#3333ff" stroke-width="1.6" /><line x1="941.3" y1="208.5" x2="941.3" y2="589" stroke="#3333ff" stroke-width="1.6" /><line x1="1139.4" y1="208.5" x2="1139.4" y2="969.5" stroke="#3333ff" stroke-width="1.6" /><line x1="408.7" y1="208.5" x2="408.7" y2="221.5" stroke="#3333ff" stroke-width="1.3" /><line x1="620.4" y1="208.5" x2="620.4" y2="221.5" stroke="#3333ff" stroke-width="1.3" /><line x1="901.6" y1="208.5" x2="901.6" y2="221.5" stroke="#3333ff" stroke-width="1.3" /><line x1="1100.6" y1="208.5" x2="1100.6" y2="221.5" stroke="#3333ff" stroke-width="1.3" /><line x1="210.5" y1="589" x2="1139.4" y2="589" stroke="#3333ff" stroke-width="1.6" /><line x1="210.5" y1="602.5" x2="1139.4" y2="602.5" stroke="#3333ff" stroke-width="1.6" /><line x1="701.8" y1="589" x2="701.8" y2="969.5" stroke="#3333ff" stroke-width="1.6" /><line x1="657.4" y1="589" x2="657.4" y2="602.5" stroke="#3333ff" stroke-width="1.3" /><line x1="1093.5" y1="589" x2="1093.5" y2="602.5" stroke="#3333ff" stroke-width="1.3" /><line x1="1139.4" y1="218.7" x2="1273.5" y2="218.7" stroke="#3333ff" stroke-width="1.6" /><text transform="translate(257,220.2) scale(0.6,1)" x="0" y="0" font-size="11.5" fill="#00e8ff" font-family="Liberation Sans" font-weight="normal" textLength="234.17" lengthAdjust="spacing" >OVER FLOW STONE COVER DETAIL</text><text transform="translate(536,220.2) scale(0.6,1)" x="0" y="0" font-size="11.5" fill="#00e8ff" font-family="Liberation Sans" font-weight="normal" textLength="86.67" lengthAdjust="spacing" >POOL DETAIL</text><text transform="translate(779,220.2) scale(0.6,1)" x="0" y="0" font-size="11.5" fill="#00e8ff" font-family="Liberation Sans" font-weight="normal" textLength="86.67" lengthAdjust="spacing" >POOL DETAIL</text><text transform="translate(984,220.2) scale(0.6,1)" x="0" y="0" font-size="11.5" fill="#00e8ff" font-family="Liberation Sans" font-weight="normal" textLength="86.67" lengthAdjust="spacing" >POOL DETAIL</text><text transform="translate(431.5,601.3) scale(0.6,1)" x="0" y="0" font-size="11.5" fill="#00e8ff" font-family="Liberation Sans" font-weight="normal" textLength="86.67" lengthAdjust="spacing" >POOL DETAIL</text><text x="882.5" y="600.5" font-size="10" fill="#00e8ff" font-family="Liberation Sans" font-weight="normal" textLength="52.5" lengthAdjust="spacingAndGlyphs" text-anchor="start" >POOL  DETAIL</text><text transform="translate(415,217.5) scale(0.8,1)" x="0" y="0" font-size="6.5" fill="#00e8ff" font-family="Liberation Sans" font-weight="bold" textLength="40.00" lengthAdjust="spacing" >SCALE  1 : 10</text><text transform="translate(625,217.5) scale(0.8,1)" x="0" y="0" font-size="6.5" fill="#00e8ff" font-family="Liberation Sans" font-weight="bold" textLength="40.00" lengthAdjust="spacing" >SCALE  1 : 10</text><text transform="translate(906,217.5) scale(0.8,1)" x="0" y="0" font-size="6.5" fill="#00e8ff" font-family="Liberation Sans" font-weight="bold" textLength="40.00" lengthAdjust="spacing" >SCALE  1 : 10</text><text transform="translate(1105,217.5) scale(0.8,1)" x="0" y="0" font-size="6.5" fill="#00e8ff" font-family="Liberation Sans" font-weight="bold" textLength="40.00" lengthAdjust="spacing" >SCALE  1 : 10</text><text transform="translate(661,598.5) scale(0.8,1)" x="0" y="0" font-size="6.5" fill="#00e8ff" font-family="Liberation Sans" font-weight="bold" textLength="40.00" lengthAdjust="spacing" >SCALE  1 : 10</text><text transform="translate(1098,598.5) scale(0.8,1)" x="0" y="0" font-size="6.5" fill="#00e8ff" font-family="Liberation Sans" font-weight="bold" textLength="40.00" lengthAdjust="spacing" >SCALE  1 : 10</text><text transform="translate(1147,216) scale(0.8,1)" x="0" y="0" font-size="6.5" fill="#2222ee" font-family="Liberation Sans" font-weight="bold" textLength="55.00" lengthAdjust="spacing" >N O T E S</text><polygon points="221.5,215 224.5,209 232.5,209 235.5,215 232.5,221 224.5,221" fill="none" stroke="#ff2020" stroke-width="1.2" /><line x1="221.5" y1="215" x2="235.5" y2="215" stroke="#ff2020" stroke-width="1" /><text x="226.9" y="214" font-size="5.5" font-family="Liberation Sans" font-weight="bold" fill="#111">1</text><rect x="223.5" y="216.5" width="10.00" height="1.80" fill="#00e8ff" stroke="none" stroke-width="1" opacity="0.8"/><polygon points="472,215 475,209 483,209 486,215 483,221 475,221" fill="none" stroke="#ff2020" stroke-width="1.2" /><line x1="472" y1="215" x2="486" y2="215" stroke="#ff2020" stroke-width="1" /><text x="477.4" y="214" font-size="5.5" font-family="Liberation Sans" font-weight="bold" fill="#111">2</text><rect x="474" y="216.5" width="10.00" height="1.80" fill="#00e8ff" stroke="none" stroke-width="1" opacity="0.8"/><polygon points="674.5,215 677.5,209 685.5,209 688.5,215 685.5,221 677.5,221" fill="none" stroke="#ff2020" stroke-width="1.2" /><line x1="674.5" y1="215" x2="688.5" y2="215" stroke="#ff2020" stroke-width="1" /><text x="679.9" y="214" font-size="5.5" font-family="Liberation Sans" font-weight="bold" fill="#111">3</text><rect x="676.5" y="216.5" width="10.00" height="1.80" fill="#00e8ff" stroke="none" stroke-width="1" opacity="0.8"/><polygon points="955,215 958,209 966,209 969,215 966,221 958,221" fill="none" stroke="#ff2020" stroke-width="1.2" /><line x1="955" y1="215" x2="969" y2="215" stroke="#ff2020" stroke-width="1" /><text x="960.4" y="214" font-size="5.5" font-family="Liberation Sans" font-weight="bold" fill="#111">4</text><rect x="957" y="216.5" width="10.00" height="1.80" fill="#00e8ff" stroke="none" stroke-width="1" opacity="0.8"/><polygon points="216.5,596 219.5,590 227.5,590 230.5,596 227.5,602 219.5,602" fill="none" stroke="#ff2020" stroke-width="1.2" /><line x1="216.5" y1="596" x2="230.5" y2="596" stroke="#ff2020" stroke-width="1" /><text x="221.9" y="595" font-size="5.5" font-family="Liberation Sans" font-weight="bold" fill="#111">5</text><rect x="218.5" y="597.5" width="10.00" height="1.80" fill="#00e8ff" stroke="none" stroke-width="1" opacity="0.8"/><polygon points="714.5,596 717.5,590 725.5,590 728.5,596 725.5,602 717.5,602" fill="none" stroke="#ff2020" stroke-width="1.2" /><line x1="714.5" y1="596" x2="728.5" y2="596" stroke="#ff2020" stroke-width="1" /><text x="719.9" y="595" font-size="5.5" font-family="Liberation Sans" font-weight="bold" fill="#111">6</text><rect x="716.5" y="597.5" width="10.00" height="1.80" fill="#00e8ff" stroke="none" stroke-width="1" opacity="0.8"/><line x1="1139.4" y1="392.5" x2="1273.5" y2="392.5" stroke="#8a4848" stroke-width="1.2" /><line x1="1139.4" y1="402.4" x2="1273.5" y2="402.4" stroke="#8a4848" stroke-width="1.2" /><line x1="1139.4" y1="412.4" x2="1273.5" y2="412.4" stroke="#8a4848" stroke-width="1.2" /><line x1="1139.4" y1="422.4" x2="1273.5" y2="422.4" stroke="#8a4848" stroke-width="1.2" /><line x1="1139.4" y1="432.4" x2="1273.5" y2="432.4" stroke="#8a4848" stroke-width="1.2" /><line x1="1139.4" y1="442.6" x2="1273.5" y2="442.6" stroke="#8a4848" stroke-width="1.2" /><line x1="1139.4" y1="452.5" x2="1273.5" y2="452.5" stroke="#8a4848" stroke-width="1.2" /><line x1="1139.4" y1="462.4" x2="1273.5" y2="462.4" stroke="#8a4848" stroke-width="1.2" /><line x1="1139.4" y1="472.5" x2="1273.5" y2="472.5" stroke="#8a4848" stroke-width="1.2" /><line x1="1139.4" y1="482.4" x2="1273.5" y2="482.4" stroke="#8a4848" stroke-width="1.2" /><line x1="1139.4" y1="492.5" x2="1273.5" y2="492.5" stroke="#8a4848" stroke-width="1.2" /><line x1="1139.4" y1="505.8" x2="1273.5" y2="505.8" stroke="#8a4848" stroke-width="1.2" /><line x1="1153.1" y1="392.5" x2="1153.1" y2="505.8" stroke="#8a4848" stroke-width="1.2" /><line x1="1240" y1="392.5" x2="1240" y2="505.8" stroke="#8a4848" stroke-width="1.2" /><line x1="1253.4" y1="392.5" x2="1253.4" y2="505.8" stroke="#8a4848" stroke-width="1.2" /><line x1="1139.4" y1="836.3" x2="1273.5" y2="836.3" stroke="#8a4848" stroke-width="1.2" /><text x="1143" y="843.5" font-size="5.5" fill="#00e8ff" font-family="Liberation Sans" font-weight="bold" textLength="21" lengthAdjust="spacingAndGlyphs" text-anchor="start" >DRAWING</text><text transform="translate(1164,859.5) scale(0.75,1)" x="0" y="0" font-size="9.5" fill="#22ee22" font-family="Liberation Sans" font-weight="bold" textLength="109.33" lengthAdjust="spacing" >SWIMMING POOL DETAIL</text><line x1="1139.4" y1="890.3" x2="1273.5" y2="890.3" stroke="#8a4848" stroke-width="1.2" /><line x1="1139.4" y1="900.4" x2="1273.5" y2="900.4" stroke="#8a4848" stroke-width="1.2" /><line x1="1166.5" y1="910.5" x2="1273.5" y2="910.5" stroke="#8a4848" stroke-width="1.2" /><line x1="1166.5" y1="920.5" x2="1273.5" y2="920.5" stroke="#8a4848" stroke-width="1.2" /><line x1="1139.4" y1="930.4" x2="1273.5" y2="930.4" stroke="#8a4848" stroke-width="1.2" /><line x1="1139.4" y1="940.4" x2="1273.5" y2="940.4" stroke="#8a4848" stroke-width="1.2" /><line x1="1139.4" y1="960.3" x2="1206.5" y2="960.3" stroke="#8a4848" stroke-width="1.2" /><line x1="1166.5" y1="890.3" x2="1166.5" y2="930.4" stroke="#8a4848" stroke-width="1.2" /><line x1="1206.5" y1="890.3" x2="1206.5" y2="969.5" stroke="#8a4848" stroke-width="1.2" /><line x1="1233.4" y1="930.4" x2="1233.4" y2="969.5" stroke="#8a4848" stroke-width="1.2" /><text x="1218" y="898" font-size="6" fill="#22ee22" font-family="Liberation Sans" font-weight="bold" textLength="14" lengthAdjust="spacingAndGlyphs" text-anchor="start" >NOCL</text><text x="1256" y="898" font-size="6" fill="#22ee22" font-family="Liberation Sans" font-weight="bold" textLength="17" lengthAdjust="spacingAndGlyphs" text-anchor="start" >05/06</text><text x="1146" y="919" font-size="6.5" fill="#22ee22" font-family="Liberation Sans" font-weight="bold" textLength="17" lengthAdjust="spacingAndGlyphs" text-anchor="start" >1  :  10</text><text transform="translate(1236,960) scale(0.85,1)" x="0" y="0" font-size="17.5" fill="#22ee22" font-family="Liberation Sans" font-weight="normal" textLength="43.53" lengthAdjust="spacing" >6301</text><line x1="1273.5" y1="208.5" x2="1273.5" y2="969.5" stroke="#3333ff" stroke-width="1.8" /><polyline points="315,258 328,233 343,233" fill="none" stroke="#8a4848" stroke-width="1" /><polyline points="318,268 330,243 343,243" fill="none" stroke="#8a4848" stroke-width="1" /><text x="344" y="235.5" font-size="5" fill="#00e8ff" font-family="Liberation Sans" font-weight="bold" textLength="46" lengthAdjust="spacingAndGlyphs" text-anchor="start" >300 X 400 X 50 THK FLAT</text><text x="344" y="240.5" font-size="5" fill="#00e8ff" font-family="Liberation Sans" font-weight="bold" textLength="52" lengthAdjust="spacingAndGlyphs" text-anchor="start" >LOCAL FRAMEWORK STONE COPING</text><text x="344" y="245.5" font-size="5" fill="#00e8ff" font-family="Liberation Sans" font-weight="bold" textLength="66" lengthAdjust="spacingAndGlyphs" text-anchor="start" >GALV. STEEL BRACKET TO CONCRETE DECK</text><text x="293" y="244.5" font-size="5" fill="#00e8ff" font-family="Liberation Sans" font-weight="bold" textLength="9" lengthAdjust="spacingAndGlyphs" text-anchor="start" >1200</text><line x1="244" y1="246.5" x2="351.5" y2="246.5" stroke="#8c8c8c" stroke-width="1" /><line x1="244" y1="243.5" x2="244" y2="249.5" stroke="#8c8c8c" stroke-width="1.2" /><line x1="351.5" y1="243.5" x2="351.5" y2="249.5" stroke="#8c8c8c" stroke-width="1.2" /><line x1="244" y1="251.5" x2="351.5" y2="251.5" stroke="#8c8c8c" stroke-width="1" /><line x1="244" y1="248.5" x2="244" y2="254.5" stroke="#8c8c8c" stroke-width="1.2" /><line x1="271" y1="248.5" x2="271" y2="254.5" stroke="#8c8c8c" stroke-width="1.2" /><line x1="297.8" y1="248.5" x2="297.8" y2="254.5" stroke="#8c8c8c" stroke-width="1.2" /><line x1="324.6" y1="248.5" x2="324.6" y2="254.5" stroke="#8c8c8c" stroke-width="1.2" /><line x1="351.4" y1="248.5" x2="351.4" y2="254.5" stroke="#8c8c8c" stroke-width="1.2" /><text x="253" y="250" font-size="4.5" fill="#00e8ff" font-family="Liberation Sans" font-weight="bold" textLength="8" lengthAdjust="spacingAndGlyphs" text-anchor="start" >300</text><text x="280" y="250" font-size="4.5" fill="#00e8ff" font-family="Liberation Sans" font-weight="bold" textLength="8" lengthAdjust="spacingAndGlyphs" text-anchor="start" >300</text><text x="307" y="250" font-size="4.5" fill="#00e8ff" font-family="Liberation Sans" font-weight="bold" textLength="8" lengthAdjust="spacingAndGlyphs" text-anchor="start" >300</text><text x="334" y="250" font-size="4.5" fill="#00e8ff" font-family="Liberation Sans" font-weight="bold" textLength="8" lengthAdjust="spacingAndGlyphs" text-anchor="start" >300</text><line x1="244" y1="252" x2="244" y2="264" stroke="#8c8c8c" stroke-width="1" /><line x1="271" y1="252" x2="271" y2="264" stroke="#8c8c8c" stroke-width="1" /><line x1="297.8" y1="252" x2="297.8" y2="264" stroke="#8c8c8c" stroke-width="1" /><line x1="324.6" y1="252" x2="324.6" y2="264" stroke="#8c8c8c" stroke-width="1" /><line x1="351.4" y1="252" x2="351.4" y2="264" stroke="#8c8c8c" stroke-width="1" /><line x1="215" y1="256.5" x2="420" y2="256.5" stroke="#22ee22" stroke-width="1.6" /><rect x="215" y="257.5" width="205.00" height="5.00" fill="#c4cad4" stroke="none" stroke-width="1" /><line x1="215" y1="258.3" x2="420" y2="258.3" stroke="#4d6482" stroke-width="1.1" /><line x1="215" y1="260.3" x2="420" y2="260.3" stroke="#4d6482" stroke-width="1.1" /><line x1="215" y1="262.2" x2="420" y2="262.2" stroke="#4d6482" stroke-width="1.1" /><line x1="215" y1="263.5" x2="420" y2="263.5" stroke="#22ee22" stroke-width="2" /><line x1="405" y1="256" x2="405" y2="264" stroke="#4d6482" stroke-width="2" /><line x1="244" y1="263" x2="244" y2="272" stroke="#22ee22" stroke-width="1.8" /><line x1="271" y1="263" x2="271" y2="272" stroke="#22ee22" stroke-width="1.8" /><line x1="297.8" y1="263" x2="297.8" y2="272" stroke="#22ee22" stroke-width="1.8" /><line x1="324.6" y1="263" x2="324.6" y2="272" stroke="#22ee22" stroke-width="1.8" /><line x1="351.4" y1="263" x2="351.4" y2="272" stroke="#22ee22" stroke-width="1.8" /><line x1="244" y1="264" x2="271" y2="272" stroke="#4d6482" stroke-width="1.3" /><line x1="244" y1="272" x2="271" y2="264" stroke="#4d6482" stroke-width="1.3" /><line x1="271" y1="264" x2="297.8" y2="272" stroke="#4d6482" stroke-width="1.3" /><line x1="271" y1="272" x2="297.8" y2="264" stroke="#4d6482" stroke-width="1.3" /><line x1="297.8" y1="264" x2="324.6" y2="272" stroke="#4d6482" stroke-width="1.3" /><line x1="297.8" y1="272" x2="324.6" y2="264" stroke="#4d6482" stroke-width="1.3" /><line x1="324.6" y1="264" x2="351.4" y2="272" stroke="#4d6482" stroke-width="1.3" /><line x1="324.6" y1="272" x2="351.4" y2="264" stroke="#4d6482" stroke-width="1.3" /><line x1="215" y1="272.3" x2="420" y2="272.3" stroke="#22ee22" stroke-width="1.6" /><line x1="217.4" y1="272.5" x2="217.4" y2="334.6" stroke="#4d6482" stroke-width="1.6" /><line x1="230.81" y1="272.5" x2="230.81" y2="334.6" stroke="#4d6482" stroke-width="1.6" /><line x1="244.22" y1="272.5" x2="244.22" y2="334.6" stroke="#4d6482" stroke-width="1.6" /><line x1="257.63" y1="272.5" x2="257.63" y2="334.6" stroke="#4d6482" stroke-width="1.6" /><line x1="271.04" y1="272.5" x2="271.04" y2="334.6" stroke="#4d6482" stroke-width="1.6" /><line x1="284.45" y1="272.5" x2="284.45" y2="334.6" stroke="#4d6482" stroke-width="1.6" /><line x1="297.86" y1="272.5" x2="297.86" y2="334.6" stroke="#4d6482" stroke-width="1.6" /><line x1="311.27" y1="272.5" x2="311.27" y2="334.6" stroke="#4d6482" stroke-width="1.6" /><line x1="324.68" y1="272.5" x2="324.68" y2="334.6" stroke="#4d6482" stroke-width="1.6" /><line x1="338.09000000000003" y1="272.5" x2="338.09000000000003" y2="334.6" stroke="#4d6482" stroke-width="1.6" /><line x1="351.5" y1="272.5" x2="351.5" y2="334.6" stroke="#4d6482" stroke-width="1.6" /><line x1="364.90999999999997" y1="272.5" x2="364.90999999999997" y2="334.6" stroke="#4d6482" stroke-width="1.6" /><line x1="378.32000000000005" y1="272.5" x2="378.32000000000005" y2="334.6" stroke="#4d6482" stroke-width="1.6" /><line x1="391.73" y1="272.5" x2="391.73" y2="334.6" stroke="#4d6482" stroke-width="1.6" /><line x1="405.14" y1="272.5" x2="405.14" y2="334.6" stroke="#4d6482" stroke-width="1.6" /><line x1="418.55" y1="272.5" x2="418.55" y2="334.6" stroke="#4d6482" stroke-width="1.6" /><line x1="215" y1="285.5" x2="420" y2="285.5" stroke="#4d6482" stroke-width="1.6" /><line x1="215" y1="298.8" x2="420" y2="298.8" stroke="#4d6482" stroke-width="1.6" /><line x1="215" y1="312.3" x2="420" y2="312.3" stroke="#4d6482" stroke-width="1.6" /><line x1="215" y1="325.4" x2="420" y2="325.4" stroke="#4d6482" stroke-width="1.6" /><line x1="426" y1="256" x2="426" y2="272" stroke="#8c8c8c" stroke-width="1" /><line x1="423" y1="256" x2="429" y2="256" stroke="#8c8c8c" stroke-width="1.2" /><line x1="423" y1="264" x2="429" y2="264" stroke="#8c8c8c" stroke-width="1.2" /><line x1="423" y1="272" x2="429" y2="272" stroke="#8c8c8c" stroke-width="1.2" /><polyline points="257.68163265306123,478 309.8,342.4 359,342.4" fill="none" stroke="#8a4848" stroke-width="1" /><polyline points="269.4756901157613,478 319.6,347.7 359,347.7" fill="none" stroke="#8a4848" stroke-width="1" /><polyline points="282.6261682242991,478 325.5,353 359,353" fill="none" stroke="#8a4848" stroke-width="1" /><polyline points="290.325,478 330.7,364 359,364" fill="none" stroke="#8a4848" stroke-width="1" /><polyline points="304.756043956044,478 335.3,369 359,369" fill="none" stroke="#8a4848" stroke-width="1" /><polyline points="316.75542590431735,478 336.6,374.3 359,374.3" fill="none" stroke="#8a4848" stroke-width="1" /><polyline points="328.04499999999996,478 342.5,380 359,380" fill="none" stroke="#8a4848" stroke-width="1" /><polyline points="335.7489932885906,478 350.4,385.5 359,385.5" fill="none" stroke="#8a4848" stroke-width="1" /><text x="360" y="344.4" font-size="5" fill="#00e8ff" font-family="Liberation Sans" font-weight="bold" textLength="33" lengthAdjust="spacingAndGlyphs" text-anchor="start" >POOL GUTTER EDGE</text><text x="360" y="349.7" font-size="5" fill="#00e8ff" font-family="Liberation Sans" font-weight="bold" textLength="66" lengthAdjust="spacingAndGlyphs" text-anchor="start" >MASONRY 20 MM WIDE X 10 MM DEEP</text><text x="360" y="355" font-size="5" fill="#00e8ff" font-family="Liberation Sans" font-weight="bold" textLength="60" lengthAdjust="spacingAndGlyphs" text-anchor="start" >LA 100 WIDE OPEN 40 THK GRATE</text><text x="360" y="366" font-size="5" fill="#00e8ff" font-family="Liberation Sans" font-weight="bold" textLength="43" lengthAdjust="spacingAndGlyphs" text-anchor="start" >LA 100 THK GRATE JOINT</text><text x="360" y="371" font-size="5" fill="#00e8ff" font-family="Liberation Sans" font-weight="bold" textLength="88" lengthAdjust="spacingAndGlyphs" text-anchor="start" >300 X 400 X 50 THK LOCAL FRAMEWORK STONE</text><text x="360" y="376.3" font-size="5" fill="#00e8ff" font-family="Liberation Sans" font-weight="bold" textLength="47" lengthAdjust="spacingAndGlyphs" text-anchor="start" >EDGE OF CHANNEL BELOW</text><text x="360" y="382" font-size="5" fill="#00e8ff" font-family="Liberation Sans" font-weight="bold" textLength="40" lengthAdjust="spacingAndGlyphs" text-anchor="start" >GRATE JOINT TO MATCH</text><text x="360" y="387.5" font-size="5" fill="#00e8ff" font-family="Liberation Sans" font-weight="bold" textLength="62" lengthAdjust="spacingAndGlyphs" text-anchor="start" >EDGE LOCATED TO SUIT FRAME</text><text x="360" y="360.3" font-size="5" fill="#00e8ff" font-family="Liberation Sans" font-weight="bold" textLength="52" lengthAdjust="spacingAndGlyphs" text-anchor="start" >TO FLOW INTO CHANNEL BELOW</text><polyline points="355.6,449.8 369.4,393.8 394.2,393.8" fill="none" stroke="#8a4848" stroke-width="1" /><polyline points="356,470 385.7,398.4 394,398.4" fill="none" stroke="#8a4848" stroke-width="1" /><text x="395" y="396" font-size="5" fill="#00e8ff" font-family="Liberation Sans" font-weight="bold" textLength="49" lengthAdjust="spacingAndGlyphs" text-anchor="start" >EXPANSION MOVEMENT JOINT</text><text x="395" y="401" font-size="5" fill="#00e8ff" font-family="Liberation Sans" font-weight="bold" textLength="44" lengthAdjust="spacingAndGlyphs" text-anchor="start" >RUBBER STOPPER SPACER</text><line x1="215" y1="409.2" x2="420" y2="409.2" stroke="#22ee22" stroke-width="2" /><line x1="215" y1="415.8" x2="420" y2="415.8" stroke="#22ee22" stroke-width="1.6" /><line x1="215" y1="418.4" x2="420" y2="418.4" stroke="#22ee22" stroke-width="1.6" /><line x1="215" y1="449.8" x2="420" y2="449.8" stroke="#22ee22" stroke-width="2.6" /><line x1="215" y1="489.8" x2="420" y2="489.8" stroke="#22ee22" stroke-width="2.6" /><line x1="215" y1="517.3" x2="420" y2="517.3" stroke="#22ee22" stroke-width="2" /><line x1="215" y1="520.3" x2="420" y2="520.3" stroke="#22ee22" stroke-width="2" /><line x1="215" y1="457.4" x2="420" y2="457.4" stroke="#22ee22" stroke-width="1.4" stroke-dasharray="3 2"/><line x1="215" y1="481.9" x2="420" y2="481.9" stroke="#22ee22" stroke-width="1.4" stroke-dasharray="3 2"/><line x1="239.7" y1="409" x2="239.7" y2="450" stroke="#22ee22" stroke-width="2" /><line x1="297.7" y1="409" x2="297.7" y2="450" stroke="#22ee22" stroke-width="2" /><line x1="356.3" y1="409" x2="356.3" y2="450" stroke="#22ee22" stroke-width="2" /><line x1="413.9" y1="409" x2="413.9" y2="450" stroke="#22ee22" stroke-width="2" /><line x1="237.8" y1="449" x2="237.8" y2="520" stroke="#22ee22" stroke-width="2" /><line x1="297.2" y1="449" x2="297.2" y2="520" stroke="#22ee22" stroke-width="2" /><line x1="356" y1="449" x2="356" y2="520" stroke="#22ee22" stroke-width="2" /><line x1="415" y1="449" x2="415" y2="520" stroke="#22ee22" stroke-width="2" /><line x1="231.2" y1="450" x2="231.2" y2="490" stroke="#22ee22" stroke-width="1.2" stroke-dasharray="3 2"/><line x1="245.7" y1="450" x2="245.7" y2="490" stroke="#22ee22" stroke-width="1.2" stroke-dasharray="3 2"/><line x1="290" y1="450" x2="290" y2="490" stroke="#22ee22" stroke-width="1.2" stroke-dasharray="3 2"/><line x1="304" y1="450" x2="304" y2="490" stroke="#22ee22" stroke-width="1.2" stroke-dasharray="3 2"/><line x1="349" y1="450" x2="349" y2="490" stroke="#22ee22" stroke-width="1.2" stroke-dasharray="3 2"/><line x1="363" y1="450" x2="363" y2="490" stroke="#22ee22" stroke-width="1.2" stroke-dasharray="3 2"/><line x1="408" y1="450" x2="408" y2="490" stroke="#22ee22" stroke-width="1.2" stroke-dasharray="3 2"/><line x1="421.5" y1="450" x2="421.5" y2="490" stroke="#22ee22" stroke-width="1.2" stroke-dasharray="3 2"/><line x1="240" y1="412.5" x2="356" y2="412.5" stroke="#4d6482" stroke-width="1" stroke-dasharray="3 1.5"/><line x1="240" y1="412.5" x2="268" y2="449" stroke="#4d6482" stroke-width="1" stroke-dasharray="3 1.5"/><line x1="268" y1="412.5" x2="240" y2="449" stroke="#4d6482" stroke-width="1" stroke-dasharray="3 1.5"/><line x1="268" y1="412.5" x2="297" y2="449" stroke="#4d6482" stroke-width="1" stroke-dasharray="3 1.5"/><line x1="297" y1="412.5" x2="268" y2="449" stroke="#4d6482" stroke-width="1" stroke-dasharray="3 1.5"/><line x1="297" y1="412.5" x2="326" y2="449" stroke="#4d6482" stroke-width="1" stroke-dasharray="3 1.5"/><line x1="326" y1="412.5" x2="297" y2="449" stroke="#4d6482" stroke-width="1" stroke-dasharray="3 1.5"/><line x1="326" y1="412.5" x2="356" y2="449" stroke="#4d6482" stroke-width="1" stroke-dasharray="3 1.5"/><line x1="356" y1="412.5" x2="326" y2="449" stroke="#4d6482" stroke-width="1" stroke-dasharray="3 1.5"/><line x1="268" y1="412" x2="268" y2="449" stroke="#4d6482" stroke-width="1" stroke-dasharray="3 1.5"/><line x1="326" y1="412" x2="326" y2="449" stroke="#4d6482" stroke-width="1" stroke-dasharray="3 1.5"/><line x1="237.8" y1="489.8" x2="297" y2="469.5" stroke="#4d6482" stroke-width="1.2" /><line x1="356" y1="489.8" x2="297" y2="469.5" stroke="#4d6482" stroke-width="1.2" /><line x1="248" y1="456" x2="297" y2="469.5" stroke="#4d6482" stroke-width="1.2" /><line x1="346" y1="456" x2="297" y2="469.5" stroke="#4d6482" stroke-width="1.2" /><rect x="293.5" y="462.5" width="7.50" height="15.50" fill="none" stroke="#4d6482" stroke-width="1" /><line x1="436" y1="409" x2="436" y2="520" stroke="#8c8c8c" stroke-width="1" /><line x1="433" y1="409" x2="439" y2="409" stroke="#8c8c8c" stroke-width="1.2" /><line x1="433" y1="449.8" x2="439" y2="449.8" stroke="#8c8c8c" stroke-width="1.2" /><line x1="433" y1="489.8" x2="439" y2="489.8" stroke="#8c8c8c" stroke-width="1.2" /><line x1="433" y1="520" x2="439" y2="520" stroke="#8c8c8c" stroke-width="1.2" /><line x1="232" y1="467" x2="246" y2="467" stroke="#8c8c8c" stroke-width="0.9" /><line x1="232" y1="464" x2="232" y2="470" stroke="#8c8c8c" stroke-width="1.2" /><line x1="246" y1="464" x2="246" y2="470" stroke="#8c8c8c" stroke-width="1.2" /><line x1="294" y1="467" x2="308" y2="467" stroke="#8c8c8c" stroke-width="0.9" /><line x1="294" y1="464" x2="294" y2="470" stroke="#8c8c8c" stroke-width="1.2" /><line x1="308" y1="464" x2="308" y2="470" stroke="#8c8c8c" stroke-width="1.2" /><line x1="350" y1="467" x2="364" y2="467" stroke="#8c8c8c" stroke-width="0.9" /><line x1="350" y1="464" x2="350" y2="470" stroke="#8c8c8c" stroke-width="1.2" /><line x1="364" y1="464" x2="364" y2="470" stroke="#8c8c8c" stroke-width="1.2" /><line x1="410" y1="467" x2="424" y2="467" stroke="#8c8c8c" stroke-width="0.9" /><line x1="410" y1="464" x2="410" y2="470" stroke="#8c8c8c" stroke-width="1.2" /><line x1="424" y1="464" x2="424" y2="470" stroke="#8c8c8c" stroke-width="1.2" /><polyline points="214.8,527.1 254.2,526.5 296.8,545.5 338.1,553.4 373.5,541.6 410.9,567.8 426,567.5" fill="none" stroke="#22ee22" stroke-width="2.3" stroke-linejoin="round"/><polyline points="254.2,520 254.2,526.5" fill="none" stroke="#22ee22" stroke-width="2.3" stroke-linejoin="round"/><polyline points="317.1,520 317.1,529.1 296.8,545.5" fill="none" stroke="#22ee22" stroke-width="2.3" stroke-linejoin="round"/><polyline points="317.1,529.1 338.1,553.4" fill="none" stroke="#22ee22" stroke-width="2.3" stroke-linejoin="round"/><polyline points="372.9,520 372.9,541.6" fill="none" stroke="#22ee22" stroke-width="2.3" stroke-linejoin="round"/><polyline points="222.7,530.4 228,556 214.8,561.9" fill="none" stroke="#22ee22" stroke-width="2.3" stroke-linejoin="round"/><polyline points="228,556 258.1,574.4 275.8,563.2 275.8,539.6" fill="none" stroke="#22ee22" stroke-width="2.3" stroke-linejoin="round"/><polyline points="275.8,563.2 309.3,574.4 309.3,560" fill="none" stroke="#22ee22" stroke-width="2.3" stroke-linejoin="round"/><polyline points="296.8,545.5 336.2,577.6" fill="none" stroke="#22ee22" stroke-width="2.3" stroke-linejoin="round"/><polyline points="338.1,553.4 334.2,575.7" fill="none" stroke="#22ee22" stroke-width="2.3" stroke-linejoin="round"/><polyline points="390,558.6 381.4,578.3" fill="none" stroke="#22ee22" stroke-width="2.3" stroke-linejoin="round"/><polyline points="275.8,511.4 303.4,558.6 338.1,558.6" fill="none" stroke="#8a4848" stroke-width="1" /><polyline points="266.6,519.3 292.9,563.9 338.1,563.9" fill="none" stroke="#8a4848" stroke-width="1" /><polyline points="260.1,532.4 282.4,569.1 338.1,569.1" fill="none" stroke="#8a4848" stroke-width="1" /><text x="340" y="560.5" font-size="5" fill="#00e8ff" font-family="Liberation Sans" font-weight="bold" textLength="86" lengthAdjust="spacingAndGlyphs" text-anchor="start" >300 X 400 X 50THK FLAT LOCAL FRAMEWORK STONE</text><text x="340" y="565.5" font-size="5" fill="#00e8ff" font-family="Liberation Sans" font-weight="bold" textLength="28" lengthAdjust="spacingAndGlyphs" text-anchor="start" >FRAMEWORK ONLY</text><text x="340" y="570.5" font-size="5" fill="#00e8ff" font-family="Liberation Sans" font-weight="bold" textLength="75" lengthAdjust="spacingAndGlyphs" text-anchor="start" >LOCAL FRAMEWORK STONE POOL DECK FINISH</text><text x="340" y="575.5" font-size="5" fill="#00e8ff" font-family="Liberation Sans" font-weight="bold" textLength="38" lengthAdjust="spacingAndGlyphs" text-anchor="start" >IN A RANDOM PATTERN</text><polygon points="470,338 571,338 571,418 659,418 659,451 621,451 621,471 488,471 488,418 538,418 538,372 470,372" fill="url(#conc)" stroke="#222" stroke-width="1.2" /><polygon points="463,372 538,372 538,418 488,418 488,499 621,499 621,479 659,479 659,492.5 635,492.5 635,513 473,513 473,404 524,404 524,390 463,390" fill="url(#soil)" stroke="none" stroke-width="1" /><line x1="463" y1="364" x2="470" y2="364" stroke="#222" stroke-width="1.5" /><rect x="488" y="471" width="133.00" height="8.50" fill="url(#grav)" stroke="none" stroke-width="1" /><rect x="488" y="479.5" width="133.00" height="6.50" fill="#fff" stroke="none" stroke-width="1" /><line x1="496" y1="486" x2="502.5" y2="479.5" stroke="#4d6482" stroke-width="1.8" /><line x1="518" y1="486" x2="524.5" y2="479.5" stroke="#4d6482" stroke-width="1.8" /><line x1="540" y1="486" x2="546.5" y2="479.5" stroke="#4d6482" stroke-width="1.8" /><line x1="562" y1="486" x2="568.5" y2="479.5" stroke="#4d6482" stroke-width="1.8" /><line x1="584" y1="486" x2="590.5" y2="479.5" stroke="#4d6482" stroke-width="1.8" /><line x1="606" y1="486" x2="612.5" y2="479.5" stroke="#4d6482" stroke-width="1.8" /><rect x="488" y="486" width="133.00" height="13.00" fill="url(#sand)" stroke="none" stroke-width="1" /><line x1="488" y1="480.0" x2="621" y2="480.0" stroke="#ff33ff" stroke-width="1.3" /><line x1="488" y1="486.5" x2="621" y2="486.5" stroke="#ff33ff" stroke-width="1.3" /><line x1="488" y1="498.5" x2="621" y2="498.5" stroke="#ff33ff" stroke-width="1.1" /><line x1="488" y1="471" x2="621" y2="471" stroke="#222" stroke-width="1.2" /><rect x="621" y="451" width="38.00" height="8.50" fill="url(#grav)" stroke="none" stroke-width="1" /><rect x="621" y="459.5" width="38.00" height="5.50" fill="#fff" stroke="none" stroke-width="1" /><line x1="629" y1="465" x2="634.5" y2="459.5" stroke="#4d6482" stroke-width="1.8" /><line x1="651" y1="465" x2="656.5" y2="459.5" stroke="#4d6482" stroke-width="1.8" /><rect x="621" y="465" width="38.00" height="14.00" fill="url(#sand)" stroke="none" stroke-width="1" /><line x1="621" y1="460.0" x2="659" y2="460.0" stroke="#ff33ff" stroke-width="1.3" /><line x1="621" y1="465.5" x2="659" y2="465.5" stroke="#ff33ff" stroke-width="1.3" /><line x1="621" y1="478.5" x2="659" y2="478.5" stroke="#ff33ff" stroke-width="1.1" /><line x1="621" y1="451" x2="659" y2="451" stroke="#222" stroke-width="1.2" /><rect x="463" y="331" width="115.00" height="7.50" fill="url(#stone)" stroke="#222" stroke-width="0.8" /><line x1="463" y1="331.6" x2="578" y2="331.6" stroke="#ff33ff" stroke-width="1.2" /><rect x="571" y="347" width="5.00" height="71.00" fill="url(#stone)" stroke="none" stroke-width="1" /><line x1="575.5" y1="347" x2="575.5" y2="412" stroke="#ff33ff" stroke-width="1.2" /><rect x="571" y="412" width="88.00" height="6.00" fill="url(#stone)" stroke="none" stroke-width="1" /><line x1="575" y1="412.5" x2="659" y2="412.5" stroke="#ff33ff" stroke-width="1.2" /><line x1="571" y1="338" x2="571" y2="418" stroke="#222" stroke-width="1.2" /><line x1="576" y1="347" x2="659" y2="347" stroke="#22ee22" stroke-width="1.5" /><polygon points="621,342 627,342 624,346" fill="#ff2020" stroke="none" stroke-width="1" /><polygon points="621,408 627,408 624,412" fill="#ff2020" stroke="none" stroke-width="1" /><polygon points="549,326 555,326 552,330" fill="#ff2020" stroke="none" stroke-width="1" /><text x="614" y="341" font-size="4.5" fill="#00e8ff" font-family="Liberation Sans" font-weight="bold" textLength="12" lengthAdjust="spacingAndGlyphs" text-anchor="start" >RL+0.000</text><text x="614" y="408" font-size="4.5" fill="#00e8ff" font-family="Liberation Sans" font-weight="bold" textLength="12" lengthAdjust="spacingAndGlyphs" text-anchor="start" >FL-0.700</text><line x1="648" y1="331" x2="648" y2="499" stroke="#8c8c8c" stroke-width="1" /><line x1="645" y1="331" x2="651" y2="331" stroke="#8c8c8c" stroke-width="1.2" /><line x1="645" y1="347" x2="651" y2="347" stroke="#8c8c8c" stroke-width="1.2" /><line x1="645" y1="418" x2="651" y2="418" stroke="#8c8c8c" stroke-width="1.2" /><line x1="645" y1="451" x2="651" y2="451" stroke="#8c8c8c" stroke-width="1.2" /><line x1="645" y1="459.5" x2="651" y2="459.5" stroke="#8c8c8c" stroke-width="1.2" /><line x1="645" y1="465" x2="651" y2="465" stroke="#8c8c8c" stroke-width="1.2" /><line x1="645" y1="479" x2="651" y2="479" stroke="#8c8c8c" stroke-width="1.2" /><line x1="470" y1="325" x2="578" y2="325" stroke="#8c8c8c" stroke-width="1" /><line x1="470" y1="322" x2="470" y2="328" stroke="#8c8c8c" stroke-width="1.2" /><line x1="512" y1="322" x2="512" y2="328" stroke="#8c8c8c" stroke-width="1.2" /><line x1="553" y1="322" x2="553" y2="328" stroke="#8c8c8c" stroke-width="1.2" /><line x1="578" y1="322" x2="578" y2="328" stroke="#8c8c8c" stroke-width="1.2" /><line x1="488" y1="519.5" x2="621" y2="519.5" stroke="#8c8c8c" stroke-width="1" /><line x1="488" y1="516.5" x2="488" y2="522.5" stroke="#8c8c8c" stroke-width="1.2" /><line x1="621" y1="516.5" x2="621" y2="522.5" stroke="#8c8c8c" stroke-width="1.2" /><text x="551" y="518" font-size="4.5" fill="#00e8ff" font-family="Liberation Sans" font-weight="bold" textLength="8" lengthAdjust="spacingAndGlyphs" text-anchor="start" >1000</text><line x1="583" y1="331" x2="583" y2="347" stroke="#8c8c8c" stroke-width="1" /><line x1="580" y1="331" x2="586" y2="331" stroke="#8c8c8c" stroke-width="1.2" /><line x1="580" y1="338.5" x2="586" y2="338.5" stroke="#8c8c8c" stroke-width="1.2" /><line x1="580" y1="347" x2="586" y2="347" stroke="#8c8c8c" stroke-width="1.2" /><polyline points="480,331 509,296 582,296" fill="none" stroke="#8a4848" stroke-width="1" /><polyline points="520,331 534,305 582,305" fill="none" stroke="#8a4848" stroke-width="1" /><polyline points="548,331 558,313 582,313" fill="none" stroke="#8a4848" stroke-width="1" /><polyline points="560,331 565,318 582,318" fill="none" stroke="#8a4848" stroke-width="1" /><polyline points="566,333 570,323 582,323" fill="none" stroke="#8a4848" stroke-width="1" /><polyline points="570,335 573,328 582,328" fill="none" stroke="#8a4848" stroke-width="1" /><text x="583" y="298.0" font-size="4.8" fill="#00e8ff" font-family="Liberation Sans" font-weight="bold" textLength="56" lengthAdjust="spacingAndGlyphs" text-anchor="start" >200 X 400 X 40 THK STONE</text><text x="583" y="302.3" font-size="4.8" fill="#00e8ff" font-family="Liberation Sans" font-weight="bold" textLength="44" lengthAdjust="spacingAndGlyphs" text-anchor="start" >LOCAL FRAMEWORK STONE</text><text x="583" y="306.6" font-size="4.8" fill="#00e8ff" font-family="Liberation Sans" font-weight="bold" textLength="56" lengthAdjust="spacingAndGlyphs" text-anchor="start" >300 X 400 X 40 THK STONE</text><text x="583" y="310.9" font-size="4.8" fill="#00e8ff" font-family="Liberation Sans" font-weight="bold" textLength="44" lengthAdjust="spacingAndGlyphs" text-anchor="start" >LOCAL FRAMEWORK STONE</text><text x="583" y="315.2" font-size="4.8" fill="#00e8ff" font-family="Liberation Sans" font-weight="bold" textLength="50" lengthAdjust="spacingAndGlyphs" text-anchor="start" >RUBBER STOPPER SPACER</text><text x="583" y="319.5" font-size="4.8" fill="#00e8ff" font-family="Liberation Sans" font-weight="bold" textLength="40" lengthAdjust="spacingAndGlyphs" text-anchor="start" >300 X 400 X 40 THK</text><text x="583" y="323.8" font-size="4.8" fill="#00e8ff" font-family="Liberation Sans" font-weight="bold" textLength="58" lengthAdjust="spacingAndGlyphs" text-anchor="start" >LOCAL FRAMEWORK STONE COPING</text><text x="583" y="328.1" font-size="4.8" fill="#00e8ff" font-family="Liberation Sans" font-weight="bold" textLength="44" lengthAdjust="spacingAndGlyphs" text-anchor="start" >MORTAR SETTING LAYER</text><polyline points="575,400 589,376 604,376" fill="none" stroke="#8a4848" stroke-width="1" /><text x="605" y="378.0" font-size="4.8" fill="#00e8ff" font-family="Liberation Sans" font-weight="bold" textLength="30" lengthAdjust="spacingAndGlyphs" text-anchor="start" >POOL WALL FINISH</text><text x="605" y="382.5" font-size="4.8" fill="#00e8ff" font-family="Liberation Sans" font-weight="bold" textLength="40" lengthAdjust="spacingAndGlyphs" text-anchor="start" >MOSAIC TILE - GREEN</text><line x1="463" y1="321" x2="470" y2="338" stroke="#8a4848" stroke-width="1" /><line x1="463" y1="344" x2="476" y2="366" stroke="#8a4848" stroke-width="1" /><polygon points="756,348 788,348 788,418.4 838,418.4 838,471 705.7,471 705.7,451.4 673,451.4 673,418.5 756,418.5" fill="url(#conc)" stroke="#222" stroke-width="1.2" /><polygon points="788,376.9 808.5,376.9 808.5,405 853,405 853,514 691,514 691,493.5 673,493.5 673,479 705.7,479 705.7,500 838,500 838,418.4 788,418.4" fill="url(#soil)" stroke="none" stroke-width="1" /><rect x="788" y="376.9" width="8.00" height="41.50" fill="url(#stone)" stroke="none" stroke-width="1" /><line x1="795.5" y1="376.9" x2="795.5" y2="418.4" stroke="#ff33ff" stroke-width="1.1" /><rect x="705.7" y="471" width="132.30" height="8.50" fill="url(#grav)" stroke="none" stroke-width="1" /><rect x="705.7" y="479.5" width="132.30" height="7.00" fill="#fff" stroke="none" stroke-width="1" /><line x1="713.7" y1="486.5" x2="720.7" y2="479.5" stroke="#4d6482" stroke-width="1.8" /><line x1="735.7" y1="486.5" x2="742.7" y2="479.5" stroke="#4d6482" stroke-width="1.8" /><line x1="757.7" y1="486.5" x2="764.7" y2="479.5" stroke="#4d6482" stroke-width="1.8" /><line x1="779.7" y1="486.5" x2="786.7" y2="479.5" stroke="#4d6482" stroke-width="1.8" /><line x1="801.7" y1="486.5" x2="808.7" y2="479.5" stroke="#4d6482" stroke-width="1.8" /><line x1="823.7" y1="486.5" x2="830.7" y2="479.5" stroke="#4d6482" stroke-width="1.8" /><rect x="705.7" y="486.5" width="132.30" height="13.50" fill="url(#sand)" stroke="none" stroke-width="1" /><line x1="705.7" y1="480.0" x2="838" y2="480.0" stroke="#ff33ff" stroke-width="1.3" /><line x1="705.7" y1="487.0" x2="838" y2="487.0" stroke="#ff33ff" stroke-width="1.3" /><line x1="705.7" y1="499.5" x2="838" y2="499.5" stroke="#ff33ff" stroke-width="1.1" /><line x1="705.7" y1="471" x2="838" y2="471" stroke="#222" stroke-width="1.2" /><rect x="673" y="451.4" width="32.70" height="8.10" fill="url(#grav)" stroke="none" stroke-width="1" /><rect x="673" y="459.5" width="32.70" height="7.00" fill="#fff" stroke="none" stroke-width="1" /><line x1="681" y1="466.5" x2="688.0" y2="459.5" stroke="#4d6482" stroke-width="1.8" /><line x1="703" y1="466.5" x2="710.0" y2="459.5" stroke="#4d6482" stroke-width="1.8" /><rect x="673" y="466.5" width="32.70" height="12.80" fill="url(#sand)" stroke="none" stroke-width="1" /><line x1="673" y1="460.0" x2="705.7" y2="460.0" stroke="#ff33ff" stroke-width="1.3" /><line x1="673" y1="467.0" x2="705.7" y2="467.0" stroke="#ff33ff" stroke-width="1.3" /><line x1="673" y1="478.8" x2="705.7" y2="478.8" stroke="#ff33ff" stroke-width="1.1" /><line x1="673" y1="451.4" x2="705.7" y2="451.4" stroke="#222" stroke-width="1.2" /><rect x="750.7" y="347.3" width="5.90" height="71.20" fill="url(#stone)" stroke="none" stroke-width="1" /><line x1="751.2" y1="347.3" x2="751.2" y2="413.5" stroke="#ff33ff" stroke-width="1.3" /><rect x="673" y="413" width="83.60" height="5.50" fill="url(#stone)" stroke="none" stroke-width="1" /><line x1="673" y1="413.5" x2="751.2" y2="413.5" stroke="#ff33ff" stroke-width="1.3" /><g transform="translate(-28,-346)"><polygon points="849.6,684.8 931,684.8 931,700.5 908.7,700.5 898.2,711 885,711 883.7,722.9 849.6,722.9" fill="url(#conc)" stroke="#222" stroke-width="1.2" /><polygon points="840,722.9 885,722.9 885,727 900.8,727 911.3,716.4 931,716.4 931,730 840,730" fill="url(#soil)" stroke="none" stroke-width="1" /><polygon points="885,717.6 900.8,717.6 911.3,707 931,707 931,716.4 911.3,716.4 900.8,727 885,727" fill="url(#stone)" stroke="none" stroke-width="1" /><polyline points="885,717.6 900.8,717.6 911.3,707 931,707" fill="none" stroke="#ff33ff" stroke-width="1.1" /><polyline points="885,711 898.2,711 908.7,700.5 931,700.5" fill="none" stroke="#111" stroke-width="1.5" /><line x1="883.7" y1="684.8" x2="883.7" y2="727" stroke="#222" stroke-width="1.2" /><rect x="776" y="677.6" width="155.00" height="7.90" fill="url(#stone)" stroke="none" stroke-width="1" /><line x1="776" y1="678.2" x2="931" y2="678.2" stroke="#ff33ff" stroke-width="1.2" /><rect x="782.7" y="685" width="41.30" height="9.00" fill="#fff" stroke="#ff33ff" stroke-width="1.2" /><line x1="782.7" y1="685" x2="824" y2="694" stroke="#ff33ff" stroke-width="1" /><line x1="782.7" y1="694" x2="824" y2="685" stroke="#ff33ff" stroke-width="1" /><line x1="784" y1="694.6" x2="849" y2="694.6" stroke="#8c8c8c" stroke-width="1" /><line x1="784" y1="702.5" x2="849" y2="702.5" stroke="#8c8c8c" stroke-width="1" /><polyline points="795,694 795,705 800,705" fill="none" stroke="#8c8c8c" stroke-width="1.2" /><polyline points="812,694 812,706 817,706" fill="none" stroke="#8c8c8c" stroke-width="1.2" /><rect x="828" y="684.8" width="21.60" height="22.20" fill="#fff" stroke="#8c8c8c" stroke-width="1.2" /><rect x="833" y="707" width="8.00" height="15.90" fill="#fff" stroke="none" stroke-width="1" /><path d="M832.5 728 V712 M841 712 V726 Q841 729.5 845 729.5 H931 M836.5 712 V728 Q836.5 738 846 738 H931" fill="none" stroke="#8c8c8c" stroke-width="1.2"/><path d="M833 713 V709 Q837 704 841 709 V713" fill="none" stroke="#2222ee" stroke-width="1.6"/><line x1="708.5" y1="693.3" x2="778.7" y2="693.3" stroke="#22ee22" stroke-width="1.5" /><polygon points="735,688 741,688 738,692" fill="#ff2020" stroke="none" stroke-width="1" /><polygon points="831,674 837,674 834,678" fill="#ff2020" stroke="none" stroke-width="1" /><polygon points="912,675 918,675 915,679" fill="#ff2020" stroke="none" stroke-width="1" /><text x="731" y="690" font-size="4.5" fill="#00e8ff" font-family="Liberation Sans" font-weight="bold" textLength="14" lengthAdjust="spacingAndGlyphs" text-anchor="start" >WL+0.000</text><text x="810" y="675" font-size="4.5" fill="#00e8ff" font-family="Liberation Sans" font-weight="bold" textLength="14" lengthAdjust="spacingAndGlyphs" text-anchor="start" >RL+0.015</text><text x="909" y="675" font-size="4.5" fill="#00e8ff" font-family="Liberation Sans" font-weight="bold" textLength="12" lengthAdjust="spacingAndGlyphs" text-anchor="start" >+0.000</text><line x1="708.5" y1="678" x2="708.5" y2="693.3" stroke="#8c8c8c" stroke-width="1" /><line x1="705.5" y1="678" x2="711.5" y2="678" stroke="#8c8c8c" stroke-width="1.2" /><line x1="705.5" y1="693.3" x2="711.5" y2="693.3" stroke="#8c8c8c" stroke-width="1.2" /><line x1="769.6" y1="677.6" x2="769.6" y2="693.3" stroke="#8c8c8c" stroke-width="1" /><line x1="766.6" y1="677.6" x2="772.6" y2="677.6" stroke="#8c8c8c" stroke-width="1.2" /><line x1="766.6" y1="685.5" x2="772.6" y2="685.5" stroke="#8c8c8c" stroke-width="1.2" /><line x1="766.6" y1="693.3" x2="772.6" y2="693.3" stroke="#8c8c8c" stroke-width="1.2" /><line x1="816" y1="666.4" x2="883.7" y2="666.4" stroke="#8c8c8c" stroke-width="1" /><line x1="816" y1="663.4" x2="816" y2="669.4" stroke="#8c8c8c" stroke-width="1.2" /><line x1="856.2" y1="663.4" x2="856.2" y2="669.4" stroke="#8c8c8c" stroke-width="1.2" /><line x1="883.7" y1="663.4" x2="883.7" y2="669.4" stroke="#8c8c8c" stroke-width="1.2" /><line x1="816.8" y1="670.4" x2="856.2" y2="670.4" stroke="#8c8c8c" stroke-width="1" /><line x1="816.8" y1="667.4" x2="816.8" y2="673.4" stroke="#8c8c8c" stroke-width="1.2" /><line x1="856.2" y1="667.4" x2="856.2" y2="673.4" stroke="#8c8c8c" stroke-width="1.2" /><text x="835" y="664" font-size="4.5" fill="#00e8ff" font-family="Liberation Sans" font-weight="bold" textLength="8" lengthAdjust="spacingAndGlyphs" text-anchor="start" >300</text><text x="869" y="664" font-size="4.5" fill="#00e8ff" font-family="Liberation Sans" font-weight="bold" textLength="8" lengthAdjust="spacingAndGlyphs" text-anchor="start" >200</text><line x1="936" y1="679.6" x2="936" y2="713.7" stroke="#8c8c8c" stroke-width="1" /><line x1="933" y1="679.6" x2="939" y2="679.6" stroke="#8c8c8c" stroke-width="1.2" /><line x1="933" y1="684.8" x2="939" y2="684.8" stroke="#8c8c8c" stroke-width="1.2" /><line x1="933" y1="700.5" x2="939" y2="700.5" stroke="#8c8c8c" stroke-width="1.2" /><line x1="933" y1="707" x2="939" y2="707" stroke="#8c8c8c" stroke-width="1.2" /><line x1="933" y1="713.7" x2="939" y2="713.7" stroke="#8c8c8c" stroke-width="1.2" /><text x="770.9" y="648.2" font-size="4.8" fill="#00e8ff" font-family="Liberation Sans" font-weight="bold" textLength="12" lengthAdjust="spacingAndGlyphs" text-anchor="end" >GRATE</text><text x="770.9" y="652.7" font-size="4.8" fill="#00e8ff" font-family="Liberation Sans" font-weight="bold" textLength="44" lengthAdjust="spacingAndGlyphs" text-anchor="end" >300 X 400 X 40 THK FLAT</text><text x="770.9" y="657.2" font-size="4.8" fill="#00e8ff" font-family="Liberation Sans" font-weight="bold" textLength="56" lengthAdjust="spacingAndGlyphs" text-anchor="end" >LOCAL FRAMEWORK STONE COPING</text><text x="770.9" y="661.7" font-size="4.8" fill="#00e8ff" font-family="Liberation Sans" font-weight="bold" textLength="46" lengthAdjust="spacingAndGlyphs" text-anchor="end" >MORTAR WITH ADHESIVE MIX</text><text x="770.9" y="666.2" font-size="4.8" fill="#00e8ff" font-family="Liberation Sans" font-weight="bold" textLength="50" lengthAdjust="spacingAndGlyphs" text-anchor="end" >STEEL ANGLE RECESS TO DECK</text><text x="770.9" y="670.7" font-size="4.8" fill="#00e8ff" font-family="Liberation Sans" font-weight="bold" textLength="68" lengthAdjust="spacingAndGlyphs" text-anchor="end" >GALV STEEL BRACKET TO CONCRETE DECK</text><polyline points="770.9,646.7 798.4,646.7 816.8,678" fill="none" stroke="#8a4848" stroke-width="1" /><polyline points="770.9,651.7 791.9,651.7 807.6,678" fill="none" stroke="#8a4848" stroke-width="1" /><polyline points="770.9,660.5 788,660.5 799.7,678" fill="none" stroke="#8a4848" stroke-width="1" /><polyline points="770.9,665.4 780,665.4 790.5,686" fill="none" stroke="#8a4848" stroke-width="1" /><polyline points="770.9,670.4 777.4,670.4 788,687.4" fill="none" stroke="#8a4848" stroke-width="1" /><text x="902.8" y="645.0" font-size="4.8" fill="#00e8ff" font-family="Liberation Sans" font-weight="bold" textLength="42" lengthAdjust="spacingAndGlyphs" text-anchor="start" >DRAINAGE CHANNEL OUTLET</text><text x="902.8" y="649.4" font-size="4.8" fill="#00e8ff" font-family="Liberation Sans" font-weight="bold" textLength="8" lengthAdjust="spacingAndGlyphs" text-anchor="start" >PVC</text><text x="902.8" y="653.8" font-size="4.8" fill="#00e8ff" font-family="Liberation Sans" font-weight="bold" textLength="44" lengthAdjust="spacingAndGlyphs" text-anchor="start" >300 X 400 X 40 THK STONE</text><text x="902.8" y="658.2" font-size="4.8" fill="#00e8ff" font-family="Liberation Sans" font-weight="bold" textLength="42" lengthAdjust="spacingAndGlyphs" text-anchor="start" >LOCAL FRAMEWORK STONE</text><text x="902.8" y="662.6" font-size="4.8" fill="#00e8ff" font-family="Liberation Sans" font-weight="bold" textLength="42" lengthAdjust="spacingAndGlyphs" text-anchor="start" >RUBBER STOPPER SPACER</text><text x="902.8" y="667.0" font-size="4.8" fill="#00e8ff" font-family="Liberation Sans" font-weight="bold" textLength="42" lengthAdjust="spacingAndGlyphs" text-anchor="start" >LOCAL FRAMEWORK STONE</text><text x="902.8" y="671.4" font-size="4.8" fill="#00e8ff" font-family="Liberation Sans" font-weight="bold" textLength="38" lengthAdjust="spacingAndGlyphs" text-anchor="start" >IN A RANDOM PATTERN</text><polyline points="902.8,642.2 859.4,642.2 839.8,678.2" fill="none" stroke="#8a4848" stroke-width="1" /><polyline points="902.8,648 873.9,648 856.2,678.2" fill="none" stroke="#8a4848" stroke-width="1" /><polyline points="902.8,653.3 883.7,653.3 869.3,678.2" fill="none" stroke="#8a4848" stroke-width="1" /><polyline points="902.8,662.5 894.2,662.5 885,678.2" fill="none" stroke="#8a4848" stroke-width="1" /><polyline points="902.8,667.3 896.9,667.3 890.3,678.2" fill="none" stroke="#8a4848" stroke-width="1" /><text x="766" y="718.5" font-size="4.8" fill="#00e8ff" font-family="Liberation Sans" font-weight="bold" textLength="32" lengthAdjust="spacingAndGlyphs" text-anchor="end" >POOL WALL FINISH</text><text x="766" y="723.1" font-size="4.8" fill="#00e8ff" font-family="Liberation Sans" font-weight="bold" textLength="38" lengthAdjust="spacingAndGlyphs" text-anchor="end" >MOSAIC TILE - GREEN</text><polyline points="766,717 779,717" fill="none" stroke="#8a4848" stroke-width="1" /></g><polygon points="703,408 709,408 706,412" fill="#ff2020" stroke="none" stroke-width="1" /><text x="693" y="410" font-size="4.5" fill="#00e8ff" font-family="Liberation Sans" font-weight="bold" textLength="12" lengthAdjust="spacingAndGlyphs" text-anchor="start" >FL-0.700</text><line x1="680.5" y1="332" x2="680.5" y2="418" stroke="#8c8c8c" stroke-width="1" /><line x1="677.5" y1="332" x2="683.5" y2="332" stroke="#8c8c8c" stroke-width="1.2" /><line x1="677.5" y1="347.3" x2="683.5" y2="347.3" stroke="#8c8c8c" stroke-width="1.2" /><line x1="677.5" y1="418" x2="683.5" y2="418" stroke="#8c8c8c" stroke-width="1.2" /><line x1="705.7" y1="519.5" x2="838" y2="519.5" stroke="#8c8c8c" stroke-width="1" /><line x1="705.7" y1="516.5" x2="705.7" y2="522.5" stroke="#8c8c8c" stroke-width="1.2" /><line x1="838" y1="516.5" x2="838" y2="522.5" stroke="#8c8c8c" stroke-width="1.2" /><text x="768" y="518" font-size="4.5" fill="#00e8ff" font-family="Liberation Sans" font-weight="bold" textLength="8" lengthAdjust="spacingAndGlyphs" text-anchor="start" >1000</text><polygon points="1010,289 1043,289 1043,462.7 1127,462.7 1127,495.9 1093,495.9 1093,515.5 960,515.5 960,462.7 1010,462.7" fill="url(#conc)" stroke="#222" stroke-width="1.2" /><polygon points="945,310 1003,310 1003,462.7 960,462.7 960,544 1093,544 1093,524 1126.6,524 1126.6,537.7 1107,537.7 1107,557 947,557 947,448 990,448 990,325 945,325" fill="url(#soil)" stroke="none" stroke-width="1" /><rect x="945" y="297" width="58.00" height="13.00" fill="url(#grass)" stroke="none" stroke-width="1" /><rect x="1003" y="297" width="7.00" height="13.00" fill="url(#stone)" stroke="none" stroke-width="1" /><line x1="945" y1="297" x2="1003" y2="297" stroke="#222" stroke-width="1" stroke-dasharray="2 1"/><line x1="945" y1="310" x2="1003" y2="310" stroke="#222" stroke-width="1" /><clipPath id="plc"><rect x="943" y="250" width="70" height="60"/></clipPath><g clip-path="url(#plc)"><path d="M949.2 303 Q949.7 280 945.2 261" fill="none" stroke="#4d6482" stroke-width="1.1"/><path d="M949.2 300 Q952.2 280 966.2 270" fill="none" stroke="#4d6482" stroke-width="1"/><path d="M949.2 300 Q946.2 280 934.2 272" fill="none" stroke="#4d6482" stroke-width="1"/><path d="M937.2 278 Q951.2 272 963.2 292" fill="none" stroke="#4d6482" stroke-width="1"/><path d="M961.2 278 Q947.2 272 935.2 292" fill="none" stroke="#4d6482" stroke-width="1"/><path d="M965.3 303 Q965.8 280 961.3 261" fill="none" stroke="#4d6482" stroke-width="1.1"/><path d="M965.3 300 Q968.3 280 982.3 270" fill="none" stroke="#4d6482" stroke-width="1"/><path d="M965.3 300 Q962.3 280 950.3 272" fill="none" stroke="#4d6482" stroke-width="1"/><path d="M953.3 278 Q967.3 272 979.3 292" fill="none" stroke="#4d6482" stroke-width="1"/><path d="M977.3 278 Q963.3 272 951.3 292" fill="none" stroke="#4d6482" stroke-width="1"/><path d="M980.8 303 Q981.3 280 976.8 261" fill="none" stroke="#4d6482" stroke-width="1.1"/><path d="M980.8 300 Q983.8 280 997.8 270" fill="none" stroke="#4d6482" stroke-width="1"/><path d="M980.8 300 Q977.8 280 965.8 272" fill="none" stroke="#4d6482" stroke-width="1"/><path d="M968.8 278 Q982.8 272 994.8 292" fill="none" stroke="#4d6482" stroke-width="1"/><path d="M992.8 278 Q978.8 272 966.8 292" fill="none" stroke="#4d6482" stroke-width="1"/><path d="M998.9 303 Q999.4 280 994.9 261" fill="none" stroke="#4d6482" stroke-width="1.1"/><path d="M998.9 300 Q1001.9 280 1015.9 270" fill="none" stroke="#4d6482" stroke-width="1"/><path d="M998.9 300 Q995.9 280 983.9 272" fill="none" stroke="#4d6482" stroke-width="1"/><path d="M986.9 278 Q1000.9 272 1012.9 292" fill="none" stroke="#4d6482" stroke-width="1"/><path d="M1010.9 278 Q996.9 272 984.9 292" fill="none" stroke="#4d6482" stroke-width="1"/></g><rect x="1003" y="297" width="7.00" height="165.70" fill="url(#stone)" stroke="none" stroke-width="1" /><rect x="1010" y="282" width="40.00" height="7.00" fill="url(#stone)" stroke="#222" stroke-width="0.8" /><line x1="1010" y1="282.6" x2="1050" y2="282.6" stroke="#ff33ff" stroke-width="1.2" /><rect x="1043" y="297" width="4.00" height="165.70" fill="url(#stone)" stroke="none" stroke-width="1" /><line x1="1046.5" y1="297" x2="1046.5" y2="457.5" stroke="#ff33ff" stroke-width="1.2" /><rect x="1043" y="457" width="84.00" height="5.70" fill="url(#stone)" stroke="none" stroke-width="1" /><line x1="1046.5" y1="457.5" x2="1127" y2="457.5" stroke="#ff33ff" stroke-width="1.2" /><rect x="960" y="515.5" width="133.00" height="8.50" fill="url(#grav)" stroke="none" stroke-width="1" /><rect x="960" y="524" width="133.00" height="6.70" fill="#fff" stroke="none" stroke-width="1" /><line x1="968" y1="530.7" x2="974.7" y2="524" stroke="#4d6482" stroke-width="1.8" /><line x1="990" y1="530.7" x2="996.7" y2="524" stroke="#4d6482" stroke-width="1.8" /><line x1="1012" y1="530.7" x2="1018.7" y2="524" stroke="#4d6482" stroke-width="1.8" /><line x1="1034" y1="530.7" x2="1040.7" y2="524" stroke="#4d6482" stroke-width="1.8" /><line x1="1056" y1="530.7" x2="1062.7" y2="524" stroke="#4d6482" stroke-width="1.8" /><line x1="1078" y1="530.7" x2="1084.7" y2="524" stroke="#4d6482" stroke-width="1.8" /><rect x="960" y="530.7" width="133.00" height="13.30" fill="url(#sand)" stroke="none" stroke-width="1" /><line x1="960" y1="524.5" x2="1093" y2="524.5" stroke="#ff33ff" stroke-width="1.3" /><line x1="960" y1="531.2" x2="1093" y2="531.2" stroke="#ff33ff" stroke-width="1.3" /><line x1="960" y1="543.5" x2="1093" y2="543.5" stroke="#ff33ff" stroke-width="1.1" /><line x1="960" y1="515.5" x2="1093" y2="515.5" stroke="#222" stroke-width="1.2" /><rect x="1093" y="495.9" width="34.00" height="7.60" fill="url(#grav)" stroke="none" stroke-width="1" /><rect x="1093" y="503.5" width="34.00" height="7.00" fill="#fff" stroke="none" stroke-width="1" /><line x1="1101" y1="510.5" x2="1108.0" y2="503.5" stroke="#4d6482" stroke-width="1.8" /><line x1="1123" y1="510.5" x2="1130.0" y2="503.5" stroke="#4d6482" stroke-width="1.8" /><rect x="1093" y="510.5" width="34.00" height="13.20" fill="url(#sand)" stroke="none" stroke-width="1" /><line x1="1093" y1="504.0" x2="1127" y2="504.0" stroke="#ff33ff" stroke-width="1.3" /><line x1="1093" y1="511.0" x2="1127" y2="511.0" stroke="#ff33ff" stroke-width="1.3" /><line x1="1093" y1="523.2" x2="1127" y2="523.2" stroke="#ff33ff" stroke-width="1.1" /><line x1="1093" y1="495.9" x2="1127" y2="495.9" stroke="#222" stroke-width="1.2" /><path d="M1049 297 H1058 Q1064 304 1069 291 Q1074 304 1082 291 Q1088 304 1095 291 Q1101 304 1108 291 Q1114 298 1127 297" fill="none" stroke="#22ee22" stroke-width="1.5"/><polygon points="1115,292 1121,292 1118,296" fill="#ff2020" stroke="none" stroke-width="1" /><polygon points="1027,277 1033,277 1030,281" fill="#ff2020" stroke="none" stroke-width="1" /><polygon points="1085,452 1091,452 1088,456" fill="#ff2020" stroke="none" stroke-width="1" /><text x="1110" y="292" font-size="4.5" fill="#00e8ff" font-family="Liberation Sans" font-weight="bold" textLength="14" lengthAdjust="spacingAndGlyphs" text-anchor="start" >WL+0.000</text><text x="1082" y="449" font-size="4.5" fill="#00e8ff" font-family="Liberation Sans" font-weight="bold" textLength="14" lengthAdjust="spacingAndGlyphs" text-anchor="start" >FL-1.500</text><line x1="1132" y1="282" x2="1132" y2="524" stroke="#8c8c8c" stroke-width="1" /><line x1="1129" y1="282" x2="1135" y2="282" stroke="#8c8c8c" stroke-width="1.2" /><line x1="1129" y1="297" x2="1135" y2="297" stroke="#8c8c8c" stroke-width="1.2" /><line x1="1129" y1="457" x2="1135" y2="457" stroke="#8c8c8c" stroke-width="1.2" /><line x1="1129" y1="462.7" x2="1135" y2="462.7" stroke="#8c8c8c" stroke-width="1.2" /><line x1="1129" y1="495.9" x2="1135" y2="495.9" stroke="#8c8c8c" stroke-width="1.2" /><line x1="1129" y1="503.5" x2="1135" y2="503.5" stroke="#8c8c8c" stroke-width="1.2" /><line x1="1129" y1="510.5" x2="1135" y2="510.5" stroke="#8c8c8c" stroke-width="1.2" /><line x1="1129" y1="523.7" x2="1135" y2="523.7" stroke="#8c8c8c" stroke-width="1.2" /><line x1="1055" y1="282" x2="1055" y2="297" stroke="#8c8c8c" stroke-width="1" /><line x1="1052" y1="282" x2="1058" y2="282" stroke="#8c8c8c" stroke-width="1.2" /><line x1="1052" y1="289" x2="1058" y2="289" stroke="#8c8c8c" stroke-width="1.2" /><line x1="1052" y1="297" x2="1058" y2="297" stroke="#8c8c8c" stroke-width="1.2" /><line x1="1010" y1="274" x2="1050" y2="274" stroke="#8c8c8c" stroke-width="1" /><line x1="1010" y1="271" x2="1010" y2="277" stroke="#8c8c8c" stroke-width="1.2" /><line x1="1050" y1="271" x2="1050" y2="277" stroke="#8c8c8c" stroke-width="1.2" /><line x1="960" y1="563" x2="1093" y2="563" stroke="#8c8c8c" stroke-width="1" /><line x1="960" y1="560" x2="960" y2="566" stroke="#8c8c8c" stroke-width="1.2" /><line x1="1093" y1="560" x2="1093" y2="566" stroke="#8c8c8c" stroke-width="1.2" /><text x="1022" y="561" font-size="4.5" fill="#00e8ff" font-family="Liberation Sans" font-weight="bold" textLength="8" lengthAdjust="spacingAndGlyphs" text-anchor="start" >1000</text><polyline points="989,292 1011,252.5 1066,252.5" fill="none" stroke="#8a4848" stroke-width="1" /><polyline points="1034,283 1046,260.5 1066,260.5" fill="none" stroke="#8a4848" stroke-width="1" /><polyline points="1038,283 1047,269 1066,269" fill="none" stroke="#8a4848" stroke-width="1" /><text x="1067" y="254.5" font-size="5" fill="#00e8ff" font-family="Liberation Sans" font-weight="bold" textLength="25" lengthAdjust="spacingAndGlyphs" text-anchor="start" >PLANTING AREA</text><text x="1067" y="262.5" font-size="5" fill="#00e8ff" font-family="Liberation Sans" font-weight="bold" textLength="44" lengthAdjust="spacingAndGlyphs" text-anchor="start" >300 X 400 X 40 THK DEK</text><text x="1067" y="270.5" font-size="5" fill="#00e8ff" font-family="Liberation Sans" font-weight="bold" textLength="38" lengthAdjust="spacingAndGlyphs" text-anchor="start" >MORTAR SETTING LAYER</text><polyline points="1047,400 1062,380 1077,380" fill="none" stroke="#8a4848" stroke-width="1" /><text x="1078" y="382" font-size="5" fill="#00e8ff" font-family="Liberation Sans" font-weight="bold" textLength="30" lengthAdjust="spacingAndGlyphs" text-anchor="start" >POOL WALL FINISH</text><text x="1078" y="387" font-size="5" fill="#00e8ff" font-family="Liberation Sans" font-weight="bold" textLength="36" lengthAdjust="spacingAndGlyphs" text-anchor="start" >MOSAIC TILE - GREEN</text><polygon points="232,832 252,832 252,808 299,808 299,786 346,786 346,764 393,764 393,742 440,742 440,720 487,720 487,698 534,698 534,676 582,676 582,653.5 621,653.5 621,833 671,833 671,886.5 537,886.5 537,867 232,867" fill="url(#conc)" stroke="#222" stroke-width="1.2" /><polygon points="329,833 587,833 587,712.5" fill="#fff" stroke="#111" stroke-width="1.3" /><line x1="329" y1="833" x2="671" y2="833" stroke="#111" stroke-width="1.2" /><polygon points="629,716 641,716 641,819 685,819 685,929 523,929 523,914.5 671,914.5 671,833 629,833" fill="url(#soil)" stroke="none" stroke-width="1" /><rect x="621" y="661" width="6.50" height="172.00" fill="url(#stone)" stroke="none" stroke-width="1" /><line x1="621.5" y1="698" x2="621.5" y2="833" stroke="#ff33ff" stroke-width="1.1" /><rect x="232" y="867" width="305.00" height="9.80" fill="url(#grav)" stroke="none" stroke-width="1" /><rect x="232" y="876.8" width="305.00" height="5.20" fill="#fff" stroke="none" stroke-width="1" /><line x1="240" y1="882" x2="245.20000000000005" y2="876.8" stroke="#4d6482" stroke-width="1.8" /><line x1="262" y1="882" x2="267.20000000000005" y2="876.8" stroke="#4d6482" stroke-width="1.8" /><line x1="284" y1="882" x2="289.20000000000005" y2="876.8" stroke="#4d6482" stroke-width="1.8" /><line x1="306" y1="882" x2="311.20000000000005" y2="876.8" stroke="#4d6482" stroke-width="1.8" /><line x1="328" y1="882" x2="333.20000000000005" y2="876.8" stroke="#4d6482" stroke-width="1.8" /><line x1="350" y1="882" x2="355.20000000000005" y2="876.8" stroke="#4d6482" stroke-width="1.8" /><line x1="372" y1="882" x2="377.20000000000005" y2="876.8" stroke="#4d6482" stroke-width="1.8" /><line x1="394" y1="882" x2="399.20000000000005" y2="876.8" stroke="#4d6482" stroke-width="1.8" /><line x1="416" y1="882" x2="421.20000000000005" y2="876.8" stroke="#4d6482" stroke-width="1.8" /><line x1="438" y1="882" x2="443.20000000000005" y2="876.8" stroke="#4d6482" stroke-width="1.8" /><line x1="460" y1="882" x2="465.20000000000005" y2="876.8" stroke="#4d6482" stroke-width="1.8" /><line x1="482" y1="882" x2="487.20000000000005" y2="876.8" stroke="#4d6482" stroke-width="1.8" /><line x1="504" y1="882" x2="509.20000000000005" y2="876.8" stroke="#4d6482" stroke-width="1.8" /><line x1="526" y1="882" x2="531.2" y2="876.8" stroke="#4d6482" stroke-width="1.8" /><rect x="232" y="882" width="305.00" height="12.70" fill="url(#sand)" stroke="none" stroke-width="1" /><line x1="232" y1="877.3" x2="537" y2="877.3" stroke="#ff33ff" stroke-width="1.3" /><line x1="232" y1="882.5" x2="537" y2="882.5" stroke="#ff33ff" stroke-width="1.3" /><line x1="232" y1="894.2" x2="537" y2="894.2" stroke="#ff33ff" stroke-width="1.1" /><line x1="232" y1="867" x2="537" y2="867" stroke="#222" stroke-width="1.2" /><polygon points="232,894.7 537,894.7 537,907 232,907" fill="url(#soil)" stroke="none" stroke-width="1" /><rect x="537" y="886.5" width="134.00" height="8.20" fill="url(#grav)" stroke="none" stroke-width="1" /><rect x="537" y="894.7" width="134.00" height="6.30" fill="#fff" stroke="none" stroke-width="1" /><line x1="545" y1="901" x2="551.3" y2="894.7" stroke="#4d6482" stroke-width="1.8" /><line x1="567" y1="901" x2="573.3" y2="894.7" stroke="#4d6482" stroke-width="1.8" /><line x1="589" y1="901" x2="595.3" y2="894.7" stroke="#4d6482" stroke-width="1.8" /><line x1="611" y1="901" x2="617.3" y2="894.7" stroke="#4d6482" stroke-width="1.8" /><line x1="633" y1="901" x2="639.3" y2="894.7" stroke="#4d6482" stroke-width="1.8" /><line x1="655" y1="901" x2="661.3" y2="894.7" stroke="#4d6482" stroke-width="1.8" /><rect x="537" y="901" width="134.00" height="13.50" fill="url(#sand)" stroke="none" stroke-width="1" /><line x1="537" y1="895.2" x2="671" y2="895.2" stroke="#ff33ff" stroke-width="1.3" /><line x1="537" y1="901.5" x2="671" y2="901.5" stroke="#ff33ff" stroke-width="1.3" /><line x1="537" y1="914.0" x2="671" y2="914.0" stroke="#ff33ff" stroke-width="1.1" /><line x1="537" y1="886.5" x2="671" y2="886.5" stroke="#222" stroke-width="1.2" /><polygon points="252,808 300,808 300,819 263,819 263,834 252,834" fill="url(#stone)" stroke="none" stroke-width="1" /><polyline points="252,832 252,808 299,808" fill="none" stroke="#ff33ff" stroke-width="1.3" /><polyline points="299,819 263,819 263,834" fill="none" stroke="#111" stroke-width="1.4" /><polygon points="299,786 347,786 347,797 310,797 310,819 299,819" fill="url(#stone)" stroke="none" stroke-width="1" /><polyline points="299,810 299,786 346,786" fill="none" stroke="#ff33ff" stroke-width="1.3" /><polyline points="346,797 310,797 310,819" fill="none" stroke="#111" stroke-width="1.4" /><polygon points="346,764 394,764 394,775 357,775 357,797 346,797" fill="url(#stone)" stroke="none" stroke-width="1" /><polyline points="346,788 346,764 393,764" fill="none" stroke="#ff33ff" stroke-width="1.3" /><polyline points="393,775 357,775 357,797" fill="none" stroke="#111" stroke-width="1.4" /><polygon points="393,742 441,742 441,753 404,753 404,775 393,775" fill="url(#stone)" stroke="none" stroke-width="1" /><polyline points="393,766 393,742 440,742" fill="none" stroke="#ff33ff" stroke-width="1.3" /><polyline points="440,753 404,753 404,775" fill="none" stroke="#111" stroke-width="1.4" /><polygon points="440,720 488,720 488,731 451,731 451,753 440,753" fill="url(#stone)" stroke="none" stroke-width="1" /><polyline points="440,744 440,720 487,720" fill="none" stroke="#ff33ff" stroke-width="1.3" /><polyline points="487,731 451,731 451,753" fill="none" stroke="#111" stroke-width="1.4" /><polygon points="487,698 535,698 535,709 498,709 498,731 487,731" fill="url(#stone)" stroke="none" stroke-width="1" /><polyline points="487,722 487,698 534,698" fill="none" stroke="#ff33ff" stroke-width="1.3" /><polyline points="534,709 498,709 498,731" fill="none" stroke="#111" stroke-width="1.4" /><polygon points="534,676 583,676 583,687 545,687 545,709 534,709" fill="url(#stone)" stroke="none" stroke-width="1" /><polyline points="534,700 534,676 582,676" fill="none" stroke="#ff33ff" stroke-width="1.3" /><polyline points="582,687 545,687 545,709" fill="none" stroke="#111" stroke-width="1.4" /><rect x="232" y="828" width="31.00" height="6.00" fill="url(#stone)" stroke="none" stroke-width="1" /><line x1="232" y1="828.5" x2="252" y2="828.5" stroke="#ff33ff" stroke-width="1.2" /><polygon points="621,661 679,661 679,676 646,676 635,686 624,686" fill="url(#conc)" stroke="#222" stroke-width="1.2" /><rect x="580.7" y="653" width="40.80" height="8.50" fill="url(#stone)" stroke="none" stroke-width="1" /><rect x="621.5" y="654.4" width="57.50" height="7.60" fill="url(#stone)" stroke="none" stroke-width="1" /><line x1="580.7" y1="653.6" x2="621.5" y2="653.6" stroke="#ff33ff" stroke-width="1.2" /><line x1="621.5" y1="655" x2="679" y2="655" stroke="#ff33ff" stroke-width="1.2" /><line x1="621.5" y1="662" x2="679" y2="662" stroke="#222" stroke-width="1.2" /><line x1="621" y1="653" x2="621" y2="833" stroke="#222" stroke-width="1.3" /><polyline points="624.3,685.9 635.2,685.9 646.1,675.6 678.9,675.6" fill="none" stroke="#111" stroke-width="1.5" /><polygon points="627.5,698 642,698 651,688 679,688 679,702.6 655,702.6 641,716 641,833 629,833 629,698" fill="url(#soil)" stroke="none" stroke-width="1" /><polygon points="623,692 640,692 649,682 679,682 679,688.5 651,688.5 642,698 623,698" fill="url(#stone)" stroke="none" stroke-width="1" /><polyline points="623,692 640,692 649,682 679,682" fill="none" stroke="#ff33ff" stroke-width="1.1" /><polyline points="623,698.5 642,698.5 651,689 679,689" fill="none" stroke="#ff33ff" stroke-width="1.1" /><line x1="236" y1="668.3" x2="582" y2="668.3" stroke="#22ee22" stroke-width="1.6" /><path d="M516 668 Q519 668 522 660 Q525 668 528 668" fill="none" stroke="#22ee22" stroke-width="1.2"/><path d="M530 668 Q533 668 536 660 Q539 668 542 668" fill="none" stroke="#22ee22" stroke-width="1.2"/><path d="M544 668 Q547 668 550 660 Q553 668 556 668" fill="none" stroke="#22ee22" stroke-width="1.2"/><path d="M558 668 Q561 668 564 660 Q567 668 570 668" fill="none" stroke="#22ee22" stroke-width="1.2"/><path d="M572 668 Q575 668 578 660 Q581 668 584 668" fill="none" stroke="#22ee22" stroke-width="1.2"/><polygon points="244,662 250,662 247,666" fill="#ff2020" stroke="none" stroke-width="1" /><polygon points="241,827 247,827 244,831" fill="#ff2020" stroke="none" stroke-width="1" /><polygon points="602,649 608,649 605,653" fill="#ff2020" stroke="none" stroke-width="1" /><polygon points="651,652 657,652 654,656" fill="#ff2020" stroke="none" stroke-width="1" /><text x="246" y="662" font-size="4.5" fill="#00e8ff" font-family="Liberation Sans" font-weight="bold" textLength="14" lengthAdjust="spacingAndGlyphs" text-anchor="start" >WL+0.000</text><text x="238" y="827" font-size="4.2" fill="#00e8ff" font-family="Liberation Sans" font-weight="bold" textLength="13" lengthAdjust="spacingAndGlyphs" text-anchor="start" >FL-1.500</text><circle cx="244" cy="818" r="3.8" fill="none" stroke="#ff2020" stroke-width="1.2"/><circle cx="280" cy="800" r="3.8" fill="none" stroke="#ff2020" stroke-width="1.2"/><circle cx="327" cy="779" r="3.8" fill="none" stroke="#ff2020" stroke-width="1.2"/><circle cx="373" cy="757" r="3.8" fill="none" stroke="#ff2020" stroke-width="1.2"/><circle cx="420" cy="735" r="3.8" fill="none" stroke="#ff2020" stroke-width="1.2"/><circle cx="467" cy="712" r="3.8" fill="none" stroke="#ff2020" stroke-width="1.2"/><circle cx="514" cy="691" r="3.8" fill="none" stroke="#ff2020" stroke-width="1.2"/><circle cx="562" cy="670" r="3.8" fill="none" stroke="#ff2020" stroke-width="1.2"/><line x1="252" y1="790" x2="299" y2="790" stroke="#8c8c8c" stroke-width="1" /><line x1="252" y1="787" x2="252" y2="793" stroke="#8c8c8c" stroke-width="1.2" /><line x1="299" y1="787" x2="299" y2="793" stroke="#8c8c8c" stroke-width="1.2" /><line x1="252" y1="790" x2="252" y2="808" stroke="#f0b040" stroke-width="0.9" stroke-dasharray="2 1.5"/><text x="271.5" y="788" font-size="4.5" fill="#00e8ff" font-family="Liberation Sans" font-weight="bold" textLength="8" lengthAdjust="spacingAndGlyphs" text-anchor="start" >250</text><line x1="299" y1="768" x2="346" y2="768" stroke="#8c8c8c" stroke-width="1" /><line x1="299" y1="765" x2="299" y2="771" stroke="#8c8c8c" stroke-width="1.2" /><line x1="346" y1="765" x2="346" y2="771" stroke="#8c8c8c" stroke-width="1.2" /><line x1="299" y1="768" x2="299" y2="786" stroke="#f0b040" stroke-width="0.9" stroke-dasharray="2 1.5"/><text x="318.5" y="766" font-size="4.5" fill="#00e8ff" font-family="Liberation Sans" font-weight="bold" textLength="8" lengthAdjust="spacingAndGlyphs" text-anchor="start" >250</text><line x1="346" y1="746" x2="393" y2="746" stroke="#8c8c8c" stroke-width="1" /><line x1="346" y1="743" x2="346" y2="749" stroke="#8c8c8c" stroke-width="1.2" /><line x1="393" y1="743" x2="393" y2="749" stroke="#8c8c8c" stroke-width="1.2" /><line x1="346" y1="746" x2="346" y2="764" stroke="#f0b040" stroke-width="0.9" stroke-dasharray="2 1.5"/><text x="365.5" y="744" font-size="4.5" fill="#00e8ff" font-family="Liberation Sans" font-weight="bold" textLength="8" lengthAdjust="spacingAndGlyphs" text-anchor="start" >250</text><line x1="393" y1="724" x2="440" y2="724" stroke="#8c8c8c" stroke-width="1" /><line x1="393" y1="721" x2="393" y2="727" stroke="#8c8c8c" stroke-width="1.2" /><line x1="440" y1="721" x2="440" y2="727" stroke="#8c8c8c" stroke-width="1.2" /><line x1="393" y1="724" x2="393" y2="742" stroke="#f0b040" stroke-width="0.9" stroke-dasharray="2 1.5"/><text x="412.5" y="722" font-size="4.5" fill="#00e8ff" font-family="Liberation Sans" font-weight="bold" textLength="8" lengthAdjust="spacingAndGlyphs" text-anchor="start" >250</text><line x1="440" y1="702" x2="487" y2="702" stroke="#8c8c8c" stroke-width="1" /><line x1="440" y1="699" x2="440" y2="705" stroke="#8c8c8c" stroke-width="1.2" /><line x1="487" y1="699" x2="487" y2="705" stroke="#8c8c8c" stroke-width="1.2" /><line x1="440" y1="702" x2="440" y2="720" stroke="#f0b040" stroke-width="0.9" stroke-dasharray="2 1.5"/><text x="459.5" y="700" font-size="4.5" fill="#00e8ff" font-family="Liberation Sans" font-weight="bold" textLength="8" lengthAdjust="spacingAndGlyphs" text-anchor="start" >250</text><line x1="487" y1="680" x2="534" y2="680" stroke="#8c8c8c" stroke-width="1" /><line x1="487" y1="677" x2="487" y2="683" stroke="#8c8c8c" stroke-width="1.2" /><line x1="534" y1="677" x2="534" y2="683" stroke="#8c8c8c" stroke-width="1.2" /><line x1="487" y1="680" x2="487" y2="698" stroke="#f0b040" stroke-width="0.9" stroke-dasharray="2 1.5"/><text x="506.5" y="678" font-size="4.5" fill="#00e8ff" font-family="Liberation Sans" font-weight="bold" textLength="8" lengthAdjust="spacingAndGlyphs" text-anchor="start" >250</text><line x1="534" y1="658" x2="582" y2="658" stroke="#8c8c8c" stroke-width="1" /><line x1="534" y1="655" x2="534" y2="661" stroke="#8c8c8c" stroke-width="1.2" /><line x1="582" y1="655" x2="582" y2="661" stroke="#8c8c8c" stroke-width="1.2" /><line x1="534" y1="658" x2="534" y2="676" stroke="#f0b040" stroke-width="0.9" stroke-dasharray="2 1.5"/><text x="554.0" y="656" font-size="4.5" fill="#00e8ff" font-family="Liberation Sans" font-weight="bold" textLength="8" lengthAdjust="spacingAndGlyphs" text-anchor="start" >250</text><line x1="232" y1="789" x2="252" y2="789" stroke="#8c8c8c" stroke-width="1" /><line x1="232" y1="786" x2="232" y2="792" stroke="#8c8c8c" stroke-width="1.2" /><line x1="252" y1="786" x2="252" y2="792" stroke="#8c8c8c" stroke-width="1.2" /><line x1="223.1" y1="652" x2="223.1" y2="829.5" stroke="#8c8c8c" stroke-width="1.1" /><line x1="229.8" y1="652" x2="229.8" y2="829.5" stroke="#8c8c8c" stroke-width="1.1" /><line x1="236.8" y1="652" x2="236.8" y2="829.5" stroke="#8c8c8c" stroke-width="1.1" /><line x1="236" y1="652" x2="245" y2="652" stroke="#8c8c8c" stroke-width="1.3" /><line x1="236" y1="668.3" x2="245" y2="668.3" stroke="#8c8c8c" stroke-width="1.3" /><line x1="236" y1="675" x2="245" y2="675" stroke="#8c8c8c" stroke-width="1.3" /><line x1="236" y1="697" x2="245" y2="697" stroke="#8c8c8c" stroke-width="1.3" /><line x1="236" y1="718.7" x2="245" y2="718.7" stroke="#8c8c8c" stroke-width="1.3" /><line x1="236" y1="741.5" x2="245" y2="741.5" stroke="#8c8c8c" stroke-width="1.3" /><line x1="236" y1="763" x2="245" y2="763" stroke="#8c8c8c" stroke-width="1.3" /><line x1="236" y1="785.2" x2="245" y2="785.2" stroke="#8c8c8c" stroke-width="1.3" /><line x1="236" y1="807.6" x2="245" y2="807.6" stroke="#8c8c8c" stroke-width="1.3" /><line x1="236" y1="829.5" x2="245" y2="829.5" stroke="#8c8c8c" stroke-width="1.3" /><text x="220" y="780" font-size="4.5" fill="#00e8ff" font-family="Liberation Sans" font-weight="bold" textLength="12" lengthAdjust="spacingAndGlyphs" text-anchor="start" transform="rotate(-90 220 780)">1700</text><line x1="224" y1="840" x2="224" y2="895" stroke="#8c8c8c" stroke-width="1" /><line x1="221" y1="840" x2="227" y2="840" stroke="#8c8c8c" stroke-width="1.2" /><line x1="221" y1="867" x2="227" y2="867" stroke="#8c8c8c" stroke-width="1.2" /><line x1="221" y1="876.8" x2="227" y2="876.8" stroke="#8c8c8c" stroke-width="1.2" /><line x1="221" y1="882" x2="227" y2="882" stroke="#8c8c8c" stroke-width="1.2" /><line x1="221" y1="894.7" x2="227" y2="894.7" stroke="#8c8c8c" stroke-width="1.2" /><text x="547" y="623.0" font-size="4.8" fill="#00e8ff" font-family="Liberation Sans" font-weight="bold" textLength="45" lengthAdjust="spacingAndGlyphs" text-anchor="end" >300 X 400 X 50 THK FLAT</text><text x="547" y="627.4" font-size="4.8" fill="#00e8ff" font-family="Liberation Sans" font-weight="bold" textLength="56" lengthAdjust="spacingAndGlyphs" text-anchor="end" >LOCAL FRAMEWORK STONE COPING</text><text x="547" y="633.5" font-size="4.8" fill="#00e8ff" font-family="Liberation Sans" font-weight="bold" textLength="80" lengthAdjust="spacingAndGlyphs" text-anchor="end" >TILE CEMENTITIOUS + CERAMIC ADHESIVE TO WALL</text><text x="549" y="639.5" font-size="4.8" fill="#00e8ff" font-family="Liberation Sans" font-weight="bold" textLength="31" lengthAdjust="spacingAndGlyphs" text-anchor="end" >POOL WALL FINISH</text><text x="549" y="643.9" font-size="4.8" fill="#00e8ff" font-family="Liberation Sans" font-weight="bold" textLength="38" lengthAdjust="spacingAndGlyphs" text-anchor="end" >MOSAIC TILE - GREEN</text><polyline points="547,621.4 582.5,621.4 599,655" fill="none" stroke="#8a4848" stroke-width="1" /><polyline points="547,632.2 578.5,632.2 593,658" fill="none" stroke="#8a4848" stroke-width="1" /><polyline points="549,638.4 564,638.4 583,668" fill="none" stroke="#8a4848" stroke-width="1" /><text x="655" y="637.0" font-size="4.8" fill="#00e8ff" font-family="Liberation Sans" font-weight="bold" textLength="44" lengthAdjust="spacingAndGlyphs" text-anchor="start" >EXPANSION JOINT/SEALANT</text><text x="655" y="642.3" font-size="4.8" fill="#00e8ff" font-family="Liberation Sans" font-weight="bold" textLength="39" lengthAdjust="spacingAndGlyphs" text-anchor="start" >MORTAR SETTING LAYER</text><text x="655" y="647.6" font-size="4.8" fill="#00e8ff" font-family="Liberation Sans" font-weight="bold" textLength="44" lengthAdjust="spacingAndGlyphs" text-anchor="start" >SEALANT TO STRUCTURAL ONE</text><text x="651" y="651.5" font-size="4.8" fill="#00e8ff" font-family="Liberation Sans" font-weight="bold" textLength="14" lengthAdjust="spacingAndGlyphs" text-anchor="start" >+0.000</text><polyline points="654,634.7 634.6,634.7 622,655" fill="none" stroke="#8a4848" stroke-width="1" /><polyline points="654,640 637,640 626,663" fill="none" stroke="#8a4848" stroke-width="1" /><polyline points="654,645.5 644.7,645.5 612,700" fill="none" stroke="#8a4848" stroke-width="1" /><polyline points="654,645.5 649,645.5 623,686" fill="none" stroke="#8a4848" stroke-width="1" /><line x1="580.7" y1="645.6" x2="621" y2="645.6" stroke="#8c8c8c" stroke-width="1" /><line x1="580.7" y1="642.6" x2="580.7" y2="648.6" stroke="#8c8c8c" stroke-width="1.2" /><line x1="621" y1="642.6" x2="621" y2="648.6" stroke="#8c8c8c" stroke-width="1.2" /><text x="597" y="643" font-size="4.5" fill="#00e8ff" font-family="Liberation Sans" font-weight="bold" textLength="8" lengthAdjust="spacingAndGlyphs" text-anchor="start" >350</text><text x="593" y="650" font-size="4.5" fill="#00e8ff" font-family="Liberation Sans" font-weight="bold" textLength="18" lengthAdjust="spacingAndGlyphs" text-anchor="start" >FL+0.000</text><line x1="684" y1="654" x2="684" y2="689" stroke="#8c8c8c" stroke-width="1" /><line x1="681" y1="654" x2="687" y2="654" stroke="#8c8c8c" stroke-width="1.2" /><line x1="681" y1="662" x2="687" y2="662" stroke="#8c8c8c" stroke-width="1.2" /><line x1="681" y1="676" x2="687" y2="676" stroke="#8c8c8c" stroke-width="1.2" /><line x1="681" y1="682" x2="687" y2="682" stroke="#8c8c8c" stroke-width="1.2" /><line x1="681" y1="689" x2="687" y2="689" stroke="#8c8c8c" stroke-width="1.2" /><text x="440" y="689" font-size="4.6" fill="#00e8ff" font-family="Liberation Sans" font-weight="bold" textLength="62" lengthAdjust="spacingAndGlyphs" text-anchor="end" >LOCAL FRAMEWORK STONE 50MM THK</text><polyline points="440,687 480,687 492,708" fill="none" stroke="#8a4848" stroke-width="1" /><text x="443" y="703" font-size="4.6" fill="#00e8ff" font-family="Liberation Sans" font-weight="bold" textLength="46" lengthAdjust="spacingAndGlyphs" text-anchor="end" >LOCAL FRAMEWORK STONE</text><text x="443" y="707.5" font-size="4.6" fill="#00e8ff" font-family="Liberation Sans" font-weight="bold" textLength="36" lengthAdjust="spacingAndGlyphs" text-anchor="end" >NOSING 50MM THK</text><polyline points="443,701 457,701 465,720" fill="none" stroke="#8a4848" stroke-width="1" /><polygon points="784,694 816,694 816,858 866,858 866,911.3 733,911.3 733,891.5 708,891.5 708,858.5 784,858.5" fill="url(#conc)" stroke="#222" stroke-width="1.2" /><polygon points="816,722.9 836.5,722.9 836.5,846.5 880,846.5 880,950.8 719.8,950.8 719.8,917 733,917 733,938.3 866,938.3 866,858 816,858" fill="url(#soil)" stroke="none" stroke-width="1" /><rect x="816" y="722.9" width="8.00" height="135.10" fill="url(#stone)" stroke="none" stroke-width="1" /><line x1="823.5" y1="722.9" x2="823.5" y2="858" stroke="#ff33ff" stroke-width="1.1" /><rect x="733" y="911.3" width="133.00" height="7.20" fill="url(#grav)" stroke="none" stroke-width="1" /><rect x="733" y="918.5" width="133.00" height="6.50" fill="#fff" stroke="none" stroke-width="1" /><line x1="741" y1="925" x2="747.5" y2="918.5" stroke="#4d6482" stroke-width="1.8" /><line x1="763" y1="925" x2="769.5" y2="918.5" stroke="#4d6482" stroke-width="1.8" /><line x1="785" y1="925" x2="791.5" y2="918.5" stroke="#4d6482" stroke-width="1.8" /><line x1="807" y1="925" x2="813.5" y2="918.5" stroke="#4d6482" stroke-width="1.8" /><line x1="829" y1="925" x2="835.5" y2="918.5" stroke="#4d6482" stroke-width="1.8" /><line x1="851" y1="925" x2="857.5" y2="918.5" stroke="#4d6482" stroke-width="1.8" /><rect x="733" y="925" width="133.00" height="13.30" fill="url(#sand)" stroke="none" stroke-width="1" /><line x1="733" y1="919.0" x2="866" y2="919.0" stroke="#ff33ff" stroke-width="1.3" /><line x1="733" y1="925.5" x2="866" y2="925.5" stroke="#ff33ff" stroke-width="1.3" /><line x1="733" y1="937.8" x2="866" y2="937.8" stroke="#ff33ff" stroke-width="1.1" /><line x1="733" y1="911.3" x2="866" y2="911.3" stroke="#222" stroke-width="1.2" /><rect x="708" y="891.5" width="25.00" height="7.90" fill="url(#grav)" stroke="none" stroke-width="1" /><rect x="708" y="899.4" width="25.00" height="6.60" fill="#fff" stroke="none" stroke-width="1" /><line x1="716" y1="906" x2="722.6" y2="899.4" stroke="#4d6482" stroke-width="1.8" /><rect x="708" y="906" width="25.00" height="11.00" fill="url(#sand)" stroke="none" stroke-width="1" /><line x1="708" y1="899.9" x2="733" y2="899.9" stroke="#ff33ff" stroke-width="1.3" /><line x1="708" y1="906.5" x2="733" y2="906.5" stroke="#ff33ff" stroke-width="1.3" /><line x1="708" y1="916.5" x2="733" y2="916.5" stroke="#ff33ff" stroke-width="1.1" /><line x1="708" y1="891.5" x2="733" y2="891.5" stroke="#222" stroke-width="1.2" /><rect x="778.7" y="693.3" width="5.90" height="165.20" fill="url(#stone)" stroke="none" stroke-width="1" /><line x1="779.2" y1="693.3" x2="779.2" y2="853.5" stroke="#ff33ff" stroke-width="1.3" /><rect x="708" y="853" width="76.60" height="6.00" fill="url(#stone)" stroke="none" stroke-width="1" /><line x1="708" y1="853.5" x2="779" y2="853.5" stroke="#ff33ff" stroke-width="1.3" /><polygon points="849.6,684.8 931,684.8 931,700.5 908.7,700.5 898.2,711 885,711 883.7,722.9 849.6,722.9" fill="url(#conc)" stroke="#222" stroke-width="1.2" /><polygon points="840,722.9 885,722.9 885,727 900.8,727 911.3,716.4 931,716.4 931,730 840,730" fill="url(#soil)" stroke="none" stroke-width="1" /><polygon points="885,717.6 900.8,717.6 911.3,707 931,707 931,716.4 911.3,716.4 900.8,727 885,727" fill="url(#stone)" stroke="none" stroke-width="1" /><polyline points="885,717.6 900.8,717.6 911.3,707 931,707" fill="none" stroke="#ff33ff" stroke-width="1.1" /><polyline points="885,711 898.2,711 908.7,700.5 931,700.5" fill="none" stroke="#111" stroke-width="1.5" /><line x1="883.7" y1="684.8" x2="883.7" y2="727" stroke="#222" stroke-width="1.2" /><rect x="776" y="677.6" width="155.00" height="7.90" fill="url(#stone)" stroke="none" stroke-width="1" /><line x1="776" y1="678.2" x2="931" y2="678.2" stroke="#ff33ff" stroke-width="1.2" /><rect x="782.7" y="685" width="41.30" height="9.00" fill="#fff" stroke="#ff33ff" stroke-width="1.2" /><line x1="782.7" y1="685" x2="824" y2="694" stroke="#ff33ff" stroke-width="1" /><line x1="782.7" y1="694" x2="824" y2="685" stroke="#ff33ff" stroke-width="1" /><line x1="784" y1="694.6" x2="849" y2="694.6" stroke="#8c8c8c" stroke-width="1" /><line x1="784" y1="702.5" x2="849" y2="702.5" stroke="#8c8c8c" stroke-width="1" /><polyline points="795,694 795,705 800,705" fill="none" stroke="#8c8c8c" stroke-width="1.2" /><polyline points="812,694 812,706 817,706" fill="none" stroke="#8c8c8c" stroke-width="1.2" /><rect x="828" y="684.8" width="21.60" height="22.20" fill="#fff" stroke="#8c8c8c" stroke-width="1.2" /><rect x="833" y="707" width="8.00" height="15.90" fill="#fff" stroke="none" stroke-width="1" /><path d="M832.5 728 V712 M841 712 V726 Q841 729.5 845 729.5 H931 M836.5 712 V728 Q836.5 738 846 738 H931" fill="none" stroke="#8c8c8c" stroke-width="1.2"/><path d="M833 713 V709 Q837 704 841 709 V713" fill="none" stroke="#2222ee" stroke-width="1.6"/><line x1="708.5" y1="693.3" x2="778.7" y2="693.3" stroke="#22ee22" stroke-width="1.5" /><polygon points="735,688 741,688 738,692" fill="#ff2020" stroke="none" stroke-width="1" /><polygon points="831,674 837,674 834,678" fill="#ff2020" stroke="none" stroke-width="1" /><polygon points="912,675 918,675 915,679" fill="#ff2020" stroke="none" stroke-width="1" /><text x="731" y="690" font-size="4.5" fill="#00e8ff" font-family="Liberation Sans" font-weight="bold" textLength="14" lengthAdjust="spacingAndGlyphs" text-anchor="start" >WL+0.000</text><text x="810" y="675" font-size="4.5" fill="#00e8ff" font-family="Liberation Sans" font-weight="bold" textLength="14" lengthAdjust="spacingAndGlyphs" text-anchor="start" >RL+0.015</text><text x="909" y="675" font-size="4.5" fill="#00e8ff" font-family="Liberation Sans" font-weight="bold" textLength="12" lengthAdjust="spacingAndGlyphs" text-anchor="start" >+0.000</text><line x1="708.5" y1="678" x2="708.5" y2="693.3" stroke="#8c8c8c" stroke-width="1" /><line x1="705.5" y1="678" x2="711.5" y2="678" stroke="#8c8c8c" stroke-width="1.2" /><line x1="705.5" y1="693.3" x2="711.5" y2="693.3" stroke="#8c8c8c" stroke-width="1.2" /><line x1="769.6" y1="677.6" x2="769.6" y2="693.3" stroke="#8c8c8c" stroke-width="1" /><line x1="766.6" y1="677.6" x2="772.6" y2="677.6" stroke="#8c8c8c" stroke-width="1.2" /><line x1="766.6" y1="685.5" x2="772.6" y2="685.5" stroke="#8c8c8c" stroke-width="1.2" /><line x1="766.6" y1="693.3" x2="772.6" y2="693.3" stroke="#8c8c8c" stroke-width="1.2" /><line x1="816" y1="666.4" x2="883.7" y2="666.4" stroke="#8c8c8c" stroke-width="1" /><line x1="816" y1="663.4" x2="816" y2="669.4" stroke="#8c8c8c" stroke-width="1.2" /><line x1="856.2" y1="663.4" x2="856.2" y2="669.4" stroke="#8c8c8c" stroke-width="1.2" /><line x1="883.7" y1="663.4" x2="883.7" y2="669.4" stroke="#8c8c8c" stroke-width="1.2" /><line x1="816.8" y1="670.4" x2="856.2" y2="670.4" stroke="#8c8c8c" stroke-width="1" /><line x1="816.8" y1="667.4" x2="816.8" y2="673.4" stroke="#8c8c8c" stroke-width="1.2" /><line x1="856.2" y1="667.4" x2="856.2" y2="673.4" stroke="#8c8c8c" stroke-width="1.2" /><text x="835" y="664" font-size="4.5" fill="#00e8ff" font-family="Liberation Sans" font-weight="bold" textLength="8" lengthAdjust="spacingAndGlyphs" text-anchor="start" >300</text><text x="869" y="664" font-size="4.5" fill="#00e8ff" font-family="Liberation Sans" font-weight="bold" textLength="8" lengthAdjust="spacingAndGlyphs" text-anchor="start" >200</text><line x1="936" y1="679.6" x2="936" y2="713.7" stroke="#8c8c8c" stroke-width="1" /><line x1="933" y1="679.6" x2="939" y2="679.6" stroke="#8c8c8c" stroke-width="1.2" /><line x1="933" y1="684.8" x2="939" y2="684.8" stroke="#8c8c8c" stroke-width="1.2" /><line x1="933" y1="700.5" x2="939" y2="700.5" stroke="#8c8c8c" stroke-width="1.2" /><line x1="933" y1="707" x2="939" y2="707" stroke="#8c8c8c" stroke-width="1.2" /><line x1="933" y1="713.7" x2="939" y2="713.7" stroke="#8c8c8c" stroke-width="1.2" /><text x="770.9" y="648.2" font-size="4.8" fill="#00e8ff" font-family="Liberation Sans" font-weight="bold" textLength="12" lengthAdjust="spacingAndGlyphs" text-anchor="end" >GRATE</text><text x="770.9" y="652.7" font-size="4.8" fill="#00e8ff" font-family="Liberation Sans" font-weight="bold" textLength="44" lengthAdjust="spacingAndGlyphs" text-anchor="end" >300 X 400 X 40 THK FLAT</text><text x="770.9" y="657.2" font-size="4.8" fill="#00e8ff" font-family="Liberation Sans" font-weight="bold" textLength="56" lengthAdjust="spacingAndGlyphs" text-anchor="end" >LOCAL FRAMEWORK STONE COPING</text><text x="770.9" y="661.7" font-size="4.8" fill="#00e8ff" font-family="Liberation Sans" font-weight="bold" textLength="46" lengthAdjust="spacingAndGlyphs" text-anchor="end" >MORTAR WITH ADHESIVE MIX</text><text x="770.9" y="666.2" font-size="4.8" fill="#00e8ff" font-family="Liberation Sans" font-weight="bold" textLength="50" lengthAdjust="spacingAndGlyphs" text-anchor="end" >STEEL ANGLE RECESS TO DECK</text><text x="770.9" y="670.7" font-size="4.8" fill="#00e8ff" font-family="Liberation Sans" font-weight="bold" textLength="68" lengthAdjust="spacingAndGlyphs" text-anchor="end" >GALV STEEL BRACKET TO CONCRETE DECK</text><polyline points="770.9,646.7 798.4,646.7 816.8,678" fill="none" stroke="#8a4848" stroke-width="1" /><polyline points="770.9,651.7 791.9,651.7 807.6,678" fill="none" stroke="#8a4848" stroke-width="1" /><polyline points="770.9,660.5 788,660.5 799.7,678" fill="none" stroke="#8a4848" stroke-width="1" /><polyline points="770.9,665.4 780,665.4 790.5,686" fill="none" stroke="#8a4848" stroke-width="1" /><polyline points="770.9,670.4 777.4,670.4 788,687.4" fill="none" stroke="#8a4848" stroke-width="1" /><text x="902.8" y="645.0" font-size="4.8" fill="#00e8ff" font-family="Liberation Sans" font-weight="bold" textLength="42" lengthAdjust="spacingAndGlyphs" text-anchor="start" >DRAINAGE CHANNEL OUTLET</text><text x="902.8" y="649.4" font-size="4.8" fill="#00e8ff" font-family="Liberation Sans" font-weight="bold" textLength="8" lengthAdjust="spacingAndGlyphs" text-anchor="start" >PVC</text><text x="902.8" y="653.8" font-size="4.8" fill="#00e8ff" font-family="Liberation Sans" font-weight="bold" textLength="44" lengthAdjust="spacingAndGlyphs" text-anchor="start" >300 X 400 X 40 THK STONE</text><text x="902.8" y="658.2" font-size="4.8" fill="#00e8ff" font-family="Liberation Sans" font-weight="bold" textLength="42" lengthAdjust="spacingAndGlyphs" text-anchor="start" >LOCAL FRAMEWORK STONE</text><text x="902.8" y="662.6" font-size="4.8" fill="#00e8ff" font-family="Liberation Sans" font-weight="bold" textLength="42" lengthAdjust="spacingAndGlyphs" text-anchor="start" >RUBBER STOPPER SPACER</text><text x="902.8" y="667.0" font-size="4.8" fill="#00e8ff" font-family="Liberation Sans" font-weight="bold" textLength="42" lengthAdjust="spacingAndGlyphs" text-anchor="start" >LOCAL FRAMEWORK STONE</text><text x="902.8" y="671.4" font-size="4.8" fill="#00e8ff" font-family="Liberation Sans" font-weight="bold" textLength="38" lengthAdjust="spacingAndGlyphs" text-anchor="start" >IN A RANDOM PATTERN</text><polyline points="902.8,642.2 859.4,642.2 839.8,678.2" fill="none" stroke="#8a4848" stroke-width="1" /><polyline points="902.8,648 873.9,648 856.2,678.2" fill="none" stroke="#8a4848" stroke-width="1" /><polyline points="902.8,653.3 883.7,653.3 869.3,678.2" fill="none" stroke="#8a4848" stroke-width="1" /><polyline points="902.8,662.5 894.2,662.5 885,678.2" fill="none" stroke="#8a4848" stroke-width="1" /><polyline points="902.8,667.3 896.9,667.3 890.3,678.2" fill="none" stroke="#8a4848" stroke-width="1" /><text x="766" y="718.5" font-size="4.8" fill="#00e8ff" font-family="Liberation Sans" font-weight="bold" textLength="32" lengthAdjust="spacingAndGlyphs" text-anchor="end" >POOL WALL FINISH</text><text x="766" y="723.1" font-size="4.8" fill="#00e8ff" font-family="Liberation Sans" font-weight="bold" textLength="38" lengthAdjust="spacingAndGlyphs" text-anchor="end" >MOSAIC TILE - GREEN</text><polyline points="766,717 779,717" fill="none" stroke="#8a4848" stroke-width="1" /><polygon points="731,848 737,848 734,852" fill="#ff2020" stroke="none" stroke-width="1" /><text x="726" y="849" font-size="4.5" fill="#00e8ff" font-family="Liberation Sans" font-weight="bold" textLength="13" lengthAdjust="spacingAndGlyphs" text-anchor="start" >FL-1.500</text><line x1="708.5" y1="678" x2="708.5" y2="938" stroke="#8c8c8c" stroke-width="1" /><line x1="705.5" y1="678" x2="711.5" y2="678" stroke="#8c8c8c" stroke-width="1.2" /><line x1="705.5" y1="693.3" x2="711.5" y2="693.3" stroke="#8c8c8c" stroke-width="1.2" /><line x1="705.5" y1="853" x2="711.5" y2="853" stroke="#8c8c8c" stroke-width="1.2" /><line x1="705.5" y1="891.5" x2="711.5" y2="891.5" stroke="#8c8c8c" stroke-width="1.2" /><line x1="705.5" y1="899.4" x2="711.5" y2="899.4" stroke="#8c8c8c" stroke-width="1.2" /><line x1="705.5" y1="906" x2="711.5" y2="906" stroke="#8c8c8c" stroke-width="1.2" /><line x1="705.5" y1="917" x2="711.5" y2="917" stroke="#8c8c8c" stroke-width="1.2" /><text x="705" y="770" font-size="4.5" fill="#00e8ff" font-family="Liberation Sans" font-weight="bold" textLength="12" lengthAdjust="spacingAndGlyphs" text-anchor="start" transform="rotate(-90 705 770)">1500</text><polygon points="1023,690 1057,690 1057,862 1106,862 1106,914.6 973,914.6 973,893 950,893 950,862 1023,862" fill="url(#conc)" stroke="#222" stroke-width="1.2" /><polygon points="1057,690 1123.7,690 1123.7,722.7 1057,722.7" fill="url(#conc)" stroke="#222" stroke-width="1.2" /><polygon points="1063,729.5 1134.6,729.5 1134.6,740 1077,740 1077,850 1120,850 1120,957.8 958.4,957.8 958.4,921 973,921 973,942 1106,942 1106,862 1063,862" fill="url(#soil)" stroke="none" stroke-width="1" /><rect x="1056.3" y="722.7" width="6.80" height="139.30" fill="url(#stone)" stroke="none" stroke-width="1" /><rect x="1056.3" y="722.7" width="78.30" height="6.80" fill="url(#stone)" stroke="none" stroke-width="1" /><line x1="1063.1" y1="729.5" x2="1134.6" y2="729.5" stroke="#ff33ff" stroke-width="1.1" /><line x1="1062.6" y1="729.5" x2="1062.6" y2="862" stroke="#ff33ff" stroke-width="1.1" /><line x1="1123.7" y1="690" x2="1123.7" y2="722.7" stroke="#111" stroke-width="1.3" /><polyline points="1123.7,715 1134.6,715" fill="none" stroke="#111" stroke-width="1.4" /><rect x="973" y="914.6" width="133.00" height="8.40" fill="url(#grav)" stroke="none" stroke-width="1" /><rect x="973" y="923" width="133.00" height="6.00" fill="#fff" stroke="none" stroke-width="1" /><line x1="981" y1="929" x2="987" y2="923" stroke="#4d6482" stroke-width="1.8" /><line x1="1003" y1="929" x2="1009" y2="923" stroke="#4d6482" stroke-width="1.8" /><line x1="1025" y1="929" x2="1031" y2="923" stroke="#4d6482" stroke-width="1.8" /><line x1="1047" y1="929" x2="1053" y2="923" stroke="#4d6482" stroke-width="1.8" /><line x1="1069" y1="929" x2="1075" y2="923" stroke="#4d6482" stroke-width="1.8" /><line x1="1091" y1="929" x2="1097" y2="923" stroke="#4d6482" stroke-width="1.8" /><rect x="973" y="929" width="133.00" height="13.00" fill="url(#sand)" stroke="none" stroke-width="1" /><line x1="973" y1="923.5" x2="1106" y2="923.5" stroke="#ff33ff" stroke-width="1.3" /><line x1="973" y1="929.5" x2="1106" y2="929.5" stroke="#ff33ff" stroke-width="1.3" /><line x1="973" y1="941.5" x2="1106" y2="941.5" stroke="#ff33ff" stroke-width="1.1" /><line x1="973" y1="914.6" x2="1106" y2="914.6" stroke="#222" stroke-width="1.2" /><rect x="950" y="893" width="23.00" height="8.00" fill="url(#grav)" stroke="none" stroke-width="1" /><rect x="950" y="901" width="23.00" height="7.00" fill="#fff" stroke="none" stroke-width="1" /><line x1="958" y1="908" x2="965" y2="901" stroke="#4d6482" stroke-width="1.8" /><rect x="950" y="908" width="23.00" height="13.00" fill="url(#sand)" stroke="none" stroke-width="1" /><line x1="950" y1="901.5" x2="973" y2="901.5" stroke="#ff33ff" stroke-width="1.3" /><line x1="950" y1="908.5" x2="973" y2="908.5" stroke="#ff33ff" stroke-width="1.3" /><line x1="950" y1="920.5" x2="973" y2="920.5" stroke="#ff33ff" stroke-width="1.1" /><line x1="950" y1="893" x2="973" y2="893" stroke="#222" stroke-width="1.2" /><rect x="1018.2" y="698.2" width="5.30" height="163.80" fill="url(#stone)" stroke="none" stroke-width="1" /><line x1="1018.7" y1="698.2" x2="1018.7" y2="855.5" stroke="#ff33ff" stroke-width="1.3" /><rect x="950" y="855" width="73.50" height="7.00" fill="url(#stone)" stroke="none" stroke-width="1" /><line x1="950" y1="855.5" x2="1018.7" y2="855.5" stroke="#ff33ff" stroke-width="1.3" /><line x1="945" y1="698.2" x2="1020" y2="698.2" stroke="#22ee22" stroke-width="1.5" /><rect x="1016.2" y="682.6" width="118.40" height="7.40" fill="url(#stone)" stroke="none" stroke-width="1" /><line x1="1016.2" y1="683.2" x2="1134.6" y2="683.2" stroke="#ff33ff" stroke-width="1.2" /><rect x="1033.2" y="683.2" width="7.50" height="20.40" fill="none" stroke="#ff2020" stroke-width="1.3" /><rect x="1030.5" y="680.5" width="12.90" height="3.10" fill="#222" stroke="none" stroke-width="1" /><rect x="1017" y="812" width="7.00" height="14.00" fill="#222" stroke="none" stroke-width="1" /><polyline points="1024,815 1040,815 1040,822 1024,822" fill="none" stroke="#ff2020" stroke-width="1" stroke-dasharray="1.5 1"/><path d="M1040.7 681 V631 Q1040.7 617 1027 618.6 L994.4 628.1 Q983.3 631.5 983.3 645 V807 Q983.3 822 996 822 H1017" fill="none" stroke="#ff33ff" stroke-width="1.4"/><path d="M1033.9 681 V631 Q1033.9 624 1027 626.1 L994.4 635.6 Q990.3 637 990.3 645 V807 Q990.3 815 998 815 H1017" fill="none" stroke="#ff33ff" stroke-width="1.4"/><line x1="983" y1="641.7" x2="1040.7" y2="641.7" stroke="#8c8c8c" stroke-width="1" /><circle cx="986.3" cy="711.8" r="2.6" fill="none" stroke="#8c8c8c" stroke-width="1.1"/><circle cx="986.3" cy="738.3" r="2.6" fill="none" stroke="#8c8c8c" stroke-width="1.1"/><circle cx="986.3" cy="764.7" r="2.6" fill="none" stroke="#8c8c8c" stroke-width="1.1"/><circle cx="986.3" cy="791.2" r="2.6" fill="none" stroke="#8c8c8c" stroke-width="1.1"/><polygon points="974.5,692 980.5,692 977.5,696" fill="#ff2020" stroke="none" stroke-width="1" /><polygon points="971,855 977,855 974,859" fill="#ff2020" stroke="none" stroke-width="1" /><polygon points="1070,678 1076,678 1073,682" fill="#ff2020" stroke="none" stroke-width="1" /><text x="969" y="694" font-size="4.5" fill="#00e8ff" font-family="Liberation Sans" font-weight="bold" textLength="13" lengthAdjust="spacingAndGlyphs" text-anchor="start" >WL+0.000</text><text x="1067" y="679.5" font-size="4.5" fill="#00e8ff" font-family="Liberation Sans" font-weight="bold" textLength="14" lengthAdjust="spacingAndGlyphs" text-anchor="start" >RL+0.015</text><text x="966" y="854" font-size="4.5" fill="#00e8ff" font-family="Liberation Sans" font-weight="bold" textLength="13" lengthAdjust="spacingAndGlyphs" text-anchor="start" >FL-1.500</text><line x1="949" y1="698.2" x2="949" y2="920" stroke="#8c8c8c" stroke-width="1" /><line x1="946" y1="698.2" x2="952" y2="698.2" stroke="#8c8c8c" stroke-width="1.2" /><line x1="946" y1="855" x2="952" y2="855" stroke="#8c8c8c" stroke-width="1.2" /><line x1="946" y1="893" x2="952" y2="893" stroke="#8c8c8c" stroke-width="1.2" /><line x1="946" y1="901" x2="952" y2="901" stroke="#8c8c8c" stroke-width="1.2" /><line x1="946" y1="908" x2="952" y2="908" stroke="#8c8c8c" stroke-width="1.2" /><line x1="946" y1="921" x2="952" y2="921" stroke="#8c8c8c" stroke-width="1.2" /><line x1="972.7" y1="619.7" x2="972.7" y2="818" stroke="#8c8c8c" stroke-width="1" /><line x1="969.7" y1="619.7" x2="975.7" y2="619.7" stroke="#8c8c8c" stroke-width="1.2" /><line x1="969.7" y1="641.7" x2="975.7" y2="641.7" stroke="#8c8c8c" stroke-width="1.2" /><line x1="969.7" y1="698.9" x2="975.7" y2="698.9" stroke="#8c8c8c" stroke-width="1.2" /><line x1="969.7" y1="711.8" x2="975.7" y2="711.8" stroke="#8c8c8c" stroke-width="1.2" /><line x1="969.7" y1="738.3" x2="975.7" y2="738.3" stroke="#8c8c8c" stroke-width="1.2" /><line x1="969.7" y1="764.7" x2="975.7" y2="764.7" stroke="#8c8c8c" stroke-width="1.2" /><line x1="969.7" y1="791.2" x2="975.7" y2="791.2" stroke="#8c8c8c" stroke-width="1.2" /><line x1="969.7" y1="818" x2="975.7" y2="818" stroke="#8c8c8c" stroke-width="1.2" /><line x1="972.7" y1="619.7" x2="1021.6" y2="619.7" stroke="#f0b040" stroke-width="1" stroke-dasharray="2 1.5"/><text x="970" y="660" font-size="4" fill="#00e8ff" font-family="Liberation Sans" font-weight="bold" textLength="9" lengthAdjust="spacingAndGlyphs" text-anchor="start" transform="rotate(-90 970 660)">250</text><text x="970" y="725" font-size="4" fill="#00e8ff" font-family="Liberation Sans" font-weight="bold" textLength="9" lengthAdjust="spacingAndGlyphs" text-anchor="start" transform="rotate(-90 970 725)">250</text><text x="970" y="751" font-size="4" fill="#00e8ff" font-family="Liberation Sans" font-weight="bold" textLength="9" lengthAdjust="spacingAndGlyphs" text-anchor="start" transform="rotate(-90 970 751)">250</text><text x="970" y="778" font-size="4" fill="#00e8ff" font-family="Liberation Sans" font-weight="bold" textLength="9" lengthAdjust="spacingAndGlyphs" text-anchor="start" transform="rotate(-90 970 778)">250</text><text x="970" y="805" font-size="4" fill="#00e8ff" font-family="Liberation Sans" font-weight="bold" textLength="9" lengthAdjust="spacingAndGlyphs" text-anchor="start" transform="rotate(-90 970 805)">250</text><line x1="1016.2" y1="671.3" x2="1123" y2="671.3" stroke="#8c8c8c" stroke-width="1" /><line x1="1016.2" y1="668.3" x2="1016.2" y2="674.3" stroke="#8c8c8c" stroke-width="1.2" /><line x1="1056.3" y1="668.3" x2="1056.3" y2="674.3" stroke="#8c8c8c" stroke-width="1.2" /><line x1="1096.5" y1="668.3" x2="1096.5" y2="674.3" stroke="#8c8c8c" stroke-width="1.2" /><line x1="1123" y1="668.3" x2="1123" y2="674.3" stroke="#8c8c8c" stroke-width="1.2" /><line x1="1056.3" y1="675.3" x2="1096.5" y2="675.3" stroke="#8c8c8c" stroke-width="1" /><line x1="1056.3" y1="672.3" x2="1056.3" y2="678.3" stroke="#8c8c8c" stroke-width="1.2" /><line x1="1096.5" y1="672.3" x2="1096.5" y2="678.3" stroke="#8c8c8c" stroke-width="1.2" /><text x="1072" y="669" font-size="4.5" fill="#00e8ff" font-family="Liberation Sans" font-weight="bold" textLength="8" lengthAdjust="spacingAndGlyphs" text-anchor="start" >200</text><text x="1105" y="669" font-size="4.5" fill="#00e8ff" font-family="Liberation Sans" font-weight="bold" textLength="8" lengthAdjust="spacingAndGlyphs" text-anchor="start" >200</text><line x1="1012" y1="683" x2="1012" y2="698" stroke="#8c8c8c" stroke-width="1" /><line x1="1009" y1="683" x2="1015" y2="683" stroke="#8c8c8c" stroke-width="1.2" /><line x1="1009" y1="690" x2="1015" y2="690" stroke="#8c8c8c" stroke-width="1.2" /><line x1="1009" y1="698" x2="1015" y2="698" stroke="#8c8c8c" stroke-width="1.2" /><polyline points="1035.2,655.3 1050.2,629.5 1055,629.5" fill="none" stroke="#8a4848" stroke-width="1" /><text x="1055.6" y="631.5" font-size="4.8" fill="#00e8ff" font-family="Liberation Sans" font-weight="bold" textLength="15" lengthAdjust="spacingAndGlyphs" text-anchor="start" >BOLTED</text><text x="1055.6" y="636.1" font-size="4.8" fill="#00e8ff" font-family="Liberation Sans" font-weight="bold" textLength="42" lengthAdjust="spacingAndGlyphs" text-anchor="start" >STAINLESS STEEL 40mm</text><polyline points="1010.7,661.5 1044.8,661.5 1057,683.2" fill="none" stroke="#8a4848" stroke-width="1" /><polyline points="1010.7,666.5 1038,666.5 1048.8,683.9" fill="none" stroke="#8a4848" stroke-width="1" /><text x="1010" y="663.5" font-size="4.8" fill="#00e8ff" font-family="Liberation Sans" font-weight="bold" textLength="13" lengthAdjust="spacingAndGlyphs" text-anchor="end" >COPING</text><text x="1010" y="668.1" font-size="4.8" fill="#00e8ff" font-family="Liberation Sans" font-weight="bold" textLength="44" lengthAdjust="spacingAndGlyphs" text-anchor="end" >300 X 400 X 40 THK STONE</text><text x="1010" y="672.7" font-size="4.8" fill="#00e8ff" font-family="Liberation Sans" font-weight="bold" textLength="55" lengthAdjust="spacingAndGlyphs" text-anchor="end" >LOCAL FRAMEWORK STONE COPING</text><text x="968" y="738" font-size="4.8" fill="#00e8ff" font-family="Liberation Sans" font-weight="bold" textLength="22" lengthAdjust="spacingAndGlyphs" text-anchor="end" >STEP LADDER</text><text x="968" y="743" font-size="4.8" fill="#00e8ff" font-family="Liberation Sans" font-weight="bold" textLength="36" lengthAdjust="spacingAndGlyphs" text-anchor="end" >STAINLESS STEEL 40mm</text><polyline points="968,736.5 975,736.5 986,752" fill="none" stroke="#8a4848" stroke-width="1" /></svg>
<svg style="left:0;top:0" width="1909" height="1029"><rect x="1846.5" y="198.5" width="11" height="3.5" fill="#eee" stroke="#333" stroke-width="1"/><rect x="1869" y="192.5" width="8.5" height="8.5" fill="#f4f4f4" stroke="#333" stroke-width="1"/><rect x="1867" y="195" width="9" height="8.5" fill="#f4f4f4" stroke="#333" stroke-width="1.1"/><rect x="1869.6" y="197.5" width="3.8" height="3.5" fill="#555" stroke="#333" stroke-width="0.8"/><path d="M1887.5 194.5 L1895.5 202 M1895.5 194.5 L1887.5 202" stroke="#333" stroke-width="3.8"/><path d="M1887.5 194.5 L1895.5 202 M1895.5 194.5 L1887.5 202" stroke="#f4f4f4" stroke-width="2"/><rect x="1871" y="443.5" width="33" height="134" rx="4" fill="#a2a2a2" stroke="#6a6a6a" stroke-width="1.3"/><rect x="1873" y="445" width="29" height="9" fill="#9a9a9a"/><path d="M1874 454.5 H1901" stroke="#959595" stroke-dasharray="1 1"/><circle cx="1898" cy="449" r="3" fill="none" stroke="#777"/><circle cx="1884" cy="473" r="8" fill="none" stroke="#8a8a8a" stroke-width="2"/><circle cx="1884" cy="473" r="3" fill="none" stroke="#8a8a8a" stroke-width="1.5"/><text x="1889" y="484" font-size="7" fill="#8a8a8a" font-family="Liberation Sans">2D</text><path d="M1879 520 C1876 512 1878 508 1880 511 V500 C1880 497 1883 497 1883 500 V507 V498 C1883 495 1886 495 1886 498 V507 V499 C1886 496 1889 496 1889 499 V508 V502 C1889 499 1892 499 1892 502 V512 C1892 518 1889 520 1887 521Z" fill="none" stroke="#8a8a8a" stroke-width="1.5"/><path d="M1876 526 L1888 538 M1876 526 h4 M1876 526 v4 M1891 526 L1880 537" stroke="#8a8a8a" stroke-width="1.4"/><circle cx="1890" cy="539" r="4" fill="none" stroke="#8a8a8a" stroke-width="1.5"/><path d="M1893 542 L1897 546" stroke="#8a8a8a" stroke-width="2"/><path d="M1885 552 l4 0 l-2 2z" fill="#8a8a8a"/><circle cx="1898" cy="570" r="3" fill="none" stroke="#8a8a8a"/><path d="M24.5 893 V978.5 H74.5 Z" fill="none" stroke="#2a3cf0" stroke-width="1.4"/><rect x="24.5" y="969.5" width="9" height="9" fill="none" stroke="#2a3cf0" stroke-width="1.3"/><path d="M52 965 L64 976 M64 965 L52 976" stroke="#2a3cf0" stroke-width="1.3"/><path d="M26 917 L32 922 L38 917 M32 922 V928" fill="none" stroke="#2a3cf0" stroke-width="1.3"/><rect x="553" y="968" width="54" height="26" fill="#808080"/><rect x="553" y="968" width="54" height="1" fill="#9a9a9a"/><rect x="558" y="972" width="2" height="2" fill="#c0c0c0"/><rect x="558" y="976" width="2" height="2" fill="#c0c0c0"/><rect x="558" y="980" width="2" height="2" fill="#c0c0c0"/><rect x="558" y="984" width="2" height="2" fill="#c0c0c0"/><rect x="558" y="988" width="2" height="2" fill="#c0c0c0"/><path d="M569 976 L577 985 M577 976 L569 985" stroke="#f4f4f4" stroke-width="2"/><path d="M589 975 A4 4 0 0 0 594 982 L600 988 L602 986 L596 980 A4 4 0 0 0 590 974 L593 977 L591 979Z" fill="#f0f0f0" stroke="#333" stroke-width="0.6"/><rect x="607" y="968" width="712" height="26" fill="#ffffff"/><path d="M607 968.5 H1361" stroke="#8a8a8a" stroke-width="1"/><path d="M553 969.5 H1273.5" stroke="#9a9aff" stroke-width="1.2"/><path d="M553 990.5 H1293.5" stroke="#d8b4b4" stroke-width="1.2" stroke-dasharray="4 3.5"/><path d="M1293.5 969 V990" stroke="#d8b4b4" stroke-width="1.2" stroke-dasharray="4 3.5"/><rect x="612.5" y="974.5" width="14" height="13" rx="1.5" fill="#e8ecf0" stroke="#9aa4ae"/><path d="M615 977 L619 980 L615 983 M619 985 H624" fill="none" stroke="#555" stroke-width="1.1"/><path d="M630 978 h5 l-2.5 3z" fill="#8a98a8"/><path d="M1319 968 H1358 Q1361 968 1361 971 V994 H1319Z" fill="#d9d9d9"/><path d="M1351 984 L1355 979 L1359 984Z" fill="#333"/></svg><div class="t" style="left:643px;top:974.5px;font-size:12px;color:#a6a6a6;letter-spacing:-0.15px;font-family:'Liberation Mono',monospace;font-style:italic;letter-spacing:-0.1px">Type a command</div>

<!-- bottom bar -->
<div class="a" style="left:10px;top:995px;width:1897px;height:29px;background:#3a3a3a"></div>
<svg style="left:0;top:0" width="1909" height="1029"><path d="M17 996 H74 C70 1000 72 1013 66 1013 H26 C20 1013 22 1000 17 996Z" fill="#555555"/><path d="M76 996 H144 C138 1000 140 1013 134 1013 H86 C80 1013 82 1000 76 996Z" fill="#6a6a6a"/><path d="M148 1011 C152 1008 150 996 158 996 H170 C166 1000 168 1011 162 1011Z" fill="#4a4a4a"/><path d="M154 1004 H163 M158.5 999.5 V1008.5" stroke="#cfcfcf" stroke-width="1.6"/><rect x="1451.5" y="996.5" width="40" height="25" fill="#454545" stroke="#5a5a5a" stroke-width="1"/><rect x="1494.5" y="996.5" width="102" height="25" fill="#454545" stroke="#5a5a5a" stroke-width="1"/><rect x="1598.5" y="996.5" width="63" height="25" fill="#454545" stroke="#5a5a5a" stroke-width="1"/><rect x="1663.5" y="996.5" width="72" height="25" fill="#454545" stroke="#5a5a5a" stroke-width="1"/><rect x="1738.5" y="996.5" width="38" height="25" fill="#454545" stroke="#5a5a5a" stroke-width="1"/><rect x="1778.5" y="996.5" width="23" height="25" fill="#454545" stroke="#5a5a5a" stroke-width="1"/><rect x="1804.5" y="996.5" width="25" height="25" fill="#454545" stroke="#5a5a5a" stroke-width="1"/><rect x="1832.5" y="996.5" width="25" height="25" fill="#454545" stroke="#5a5a5a" stroke-width="1"/><rect x="1860.5" y="996.5" width="45" height="25" fill="#454545" stroke="#5a5a5a" stroke-width="1"/><rect x="1496" y="998" width="21" height="22" fill="#5b8fc8"/><path d="M1501.5 1001 V1015.5 H1514 M1501.5 1010.5 H1506.5 V1015" fill="none" stroke="#f0f0f0" stroke-width="1.2"/><circle cx="1529" cy="1010" r="6" fill="none" stroke="#d0d0d0" stroke-width="1.2"/><path d="M1523 1010 H1539 M1529 1010 L1537 1003" stroke="#d0d0d0" stroke-width="1.1"/><path d="M1547 1007 h6 l-3 3.5z M1586 1007 h6 l-3 3.5z M1650 1007 h6 l-3 3.5z M1767 1007 h6 l-3 3.5z" fill="#e0e0e0"/><path d="M1563 1001 L1577 1018" stroke="#e04040" stroke-width="1.2"/><path d="M1570 1000 V1020" stroke="#40c040" stroke-width="1.2"/><circle cx="1570" cy="1009" r="1.6" fill="#ddd"/><path d="M1603 1016.5 H1618 M1603 1016 L1616 1004" stroke="#d0d0d0" stroke-width="1.2"/><circle cx="1609" cy="1011" r="1.5" fill="#ddd"/><rect x="1623" y="998" width="21" height="22" fill="#5b8fc8"/><rect x="1628.5" y="1004.5" width="12" height="12" fill="none" stroke="#f0f0f0" stroke-width="1.3"/><rect x="1625.5" y="1001.5" width="3" height="3" fill="none" stroke="#f0f0f0"/><rect x="1668.5" y="1002.5" width="15" height="14" fill="none" stroke="#d0d0d0" stroke-dasharray="2 2"/><rect x="1672.5" y="1006.5" width="7" height="6" fill="none" stroke="#d0d0d0"/><path d="M1700 1003 L1693 1018 L1700 1013 L1707 1018Z" fill="#d0d0d0"/><circle cx="1706" cy="1004" r="2.5" fill="none" stroke="#d0d0d0"/><path d="M1724 1003 L1717 1018 L1724 1013 L1731 1018Z" fill="#d0d0d0"/><path d="M1729 1001 L1726 1006 L1730 1006 L1727 1010" fill="none" stroke="#d0d0d0"/><g transform="translate(1751,1009)"><rect x="-1.6" y="-8" width="3.2" height="4" fill="#d0d0d0" transform="rotate(0)"/><rect x="-1.6" y="-8" width="3.2" height="4" fill="#d0d0d0" transform="rotate(45)"/><rect x="-1.6" y="-8" width="3.2" height="4" fill="#d0d0d0" transform="rotate(90)"/><rect x="-1.6" y="-8" width="3.2" height="4" fill="#d0d0d0" transform="rotate(135)"/><rect x="-1.6" y="-8" width="3.2" height="4" fill="#d0d0d0" transform="rotate(180)"/><rect x="-1.6" y="-8" width="3.2" height="4" fill="#d0d0d0" transform="rotate(225)"/><rect x="-1.6" y="-8" width="3.2" height="4" fill="#d0d0d0" transform="rotate(270)"/><rect x="-1.6" y="-8" width="3.2" height="4" fill="#d0d0d0" transform="rotate(315)"/><circle r="5.2" fill="#d0d0d0"/><circle r="2" fill="#454545"/></g><path d="M1790 1002 V1017 M1782.5 1009.5 H1797.5" stroke="#e0e0e0" stroke-width="1.8"/><rect x="1809.5" y="1001.5" width="6" height="6" fill="none" stroke="#d0d0d0"/><circle cx="1822" cy="1008" r="3" fill="none" stroke="#d0d0d0"/><path d="M1813 1012 L1810 1017 H1816Z" fill="none" stroke="#d0d0d0"/><rect x="1837" y="1002" width="12" height="15" fill="#6aa8e0"/><rect x="1837" y="1010" width="12" height="7" fill="#e8b860"/><path d="M1846 1015 L1848 1017 L1853 1011" fill="none" stroke="#40c080" stroke-width="1.4"/><rect x="1864.5" y="1003.5" width="15" height="12" fill="none" stroke="#d0d0d0"/><path d="M1867 1013 L1877 1006" stroke="#d0d0d0"/><path d="M1886 1003.5 H1901 M1886 1009.5 H1901 M1886 1015.5 H1901" stroke="#e0e0e0" stroke-width="2"/></svg><div class="t" style="left:31px;top:998.5px;font-size:12px;color:#b4b4b4;letter-spacing:-0.15px;">Model</div><div class="t" style="left:88px;top:998.5px;font-size:12px;color:#ffffff;letter-spacing:-0.15px;font-weight:bold">Layout1</div><div class="t" style="left:1455px;top:1003.5px;font-size:11px;color:#f0f0f0;letter-spacing:-0.15px;letter-spacing:-0.2px">PAPER</div><div class="a" style="left:8px;top:1023px;width:1900px;height:1px;background:#5e2218"></div>
</body></html>
